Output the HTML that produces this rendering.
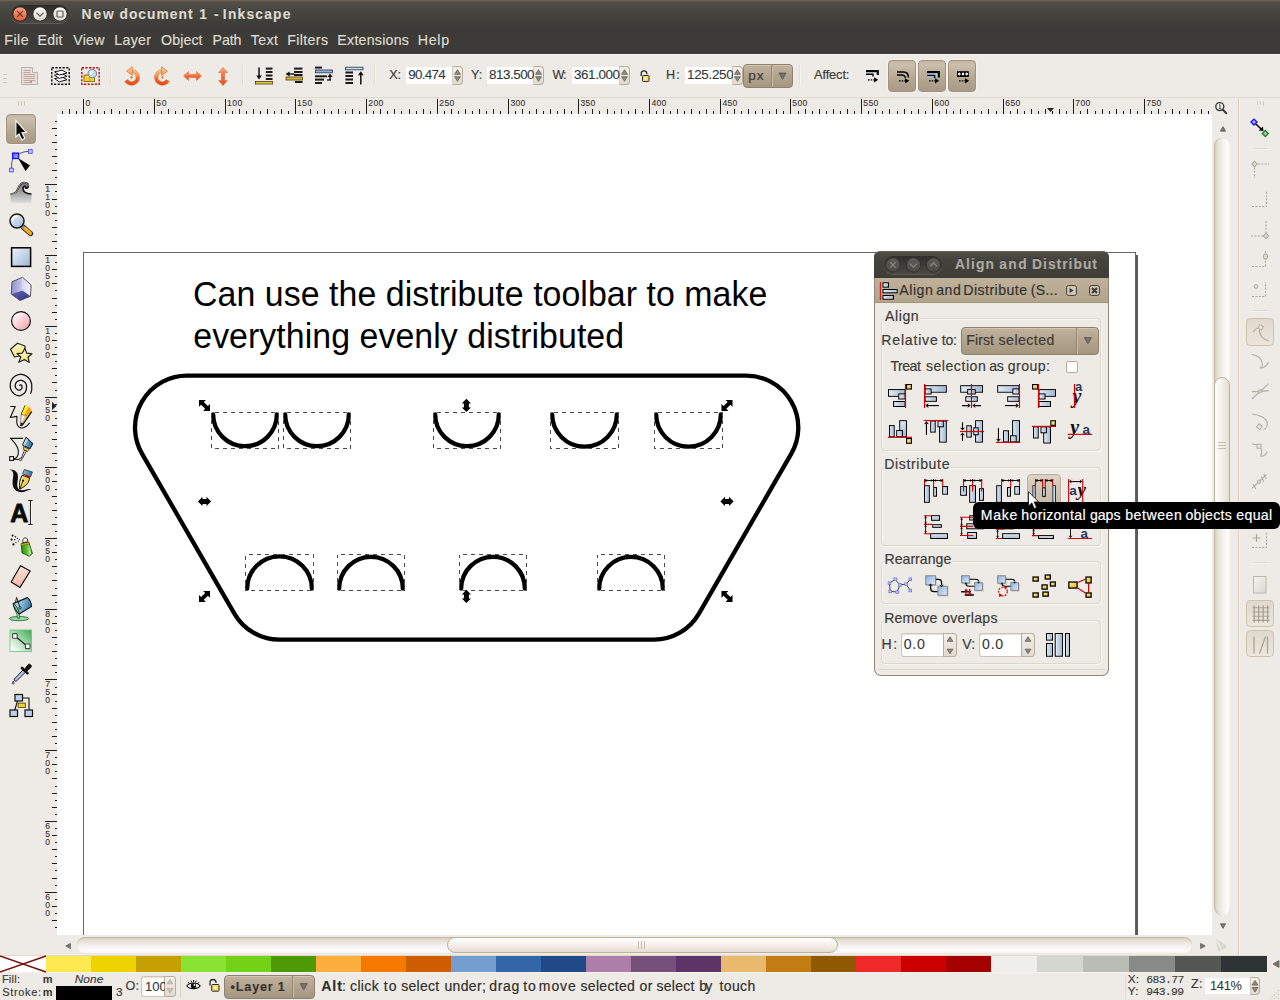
<!DOCTYPE html>
<html><head><meta charset="utf-8"><title>New document 1 - Inkscape</title>
<style>
html,body{margin:0;padding:0;}
body{width:1280px;height:1000px;overflow:hidden;position:relative;background:#eeeae5;font-family:"Liberation Sans",sans-serif;}
.a{position:absolute;box-sizing:border-box;}
.t{position:absolute;white-space:pre;font-family:"Liberation Sans",sans-serif;}
svg{overflow:visible;}
svg text{white-space:pre;}
</style></head><body>
<div class="a" style="left:0px;top:0px;width:1280px;height:28px;background:linear-gradient(#5a574f 0px,#4f4d47 3px,#3f3e39 22px,#3c3b37 28px);"></div>
<div class="a" style="left:0px;top:0px;width:1280px;height:1px;background:#6f6253;"></div>
<div class="a" style="left:11px;top:5px;width:58px;height:18px;border-radius:9px;background:linear-gradient(#2b2a27,#4a4843);box-shadow:0 1px 0 #5d5b55;"></div>
<svg class="a" style="left:0px;top:0px;" width="100" height="28" viewBox="0 0 100 28"><defs><linearGradient id="gclose" x1="0" y1="0" x2="0" y2="1"><stop offset="0" stop-color="#f9a17e"/><stop offset="1" stop-color="#e55d30"/></linearGradient><linearGradient id="ggrey" x1="0" y1="0" x2="0" y2="1"><stop offset="0" stop-color="#fdfcfa"/><stop offset="1" stop-color="#d9d4c9"/></linearGradient><linearGradient id="gin" x1="0" y1="0" x2="0" y2="1"><stop offset="0" stop-color="#5e5c56"/><stop offset="1" stop-color="#4c4a45"/></linearGradient></defs><g transform="translate(20,14)"><circle r="7.2" fill="url(#gclose)" stroke="#2a2926" stroke-width="1"/><path d="M-2.9,-2.9L2.9,2.9M2.9,-2.9L-2.9,2.9" stroke="#6a3a28" stroke-width="1.25" fill="none"/></g><g transform="translate(40,14)"><circle r="7.2" fill="url(#ggrey)" stroke="#2a2926" stroke-width="1"/><path d="M-3.6,-1.4L0,2.2L3.6,-1.4" stroke="#5d5a54" stroke-width="1.25" fill="none"/></g><g transform="translate(60,14)"><circle r="7.2" fill="url(#ggrey)" stroke="#2a2926" stroke-width="1"/><rect x="-3" y="-3" width="6" height="6" rx="0.8" stroke="#5d5a54" stroke-width="1.2" fill="none"/></g></svg>
<svg class="a tx" style="left:0;top:0" width="1" height="1"><text x="81.60" y="18.40" font-size="13.80" fill="#dfdbd2" stroke="#dfdbd2" stroke-width="0.09" letter-spacing="1.859" font-weight="bold" style="fill:#2a2926">New</text><text x="81.60" y="19.40" font-size="13.80" fill="#dfdbd2" stroke="#dfdbd2" stroke-width="0.09" letter-spacing="1.859" font-weight="bold">New</text></svg>
<svg class="a tx" style="left:0;top:0" width="1" height="1"><text x="119.45" y="18.40" font-size="13.80" fill="#dfdbd2" stroke="#dfdbd2" stroke-width="0.09" letter-spacing="1.032" font-weight="bold" style="fill:#2a2926">document</text><text x="119.45" y="19.40" font-size="13.80" fill="#dfdbd2" stroke="#dfdbd2" stroke-width="0.09" letter-spacing="1.032" font-weight="bold">document</text></svg>
<svg class="a tx" style="left:0;top:0" width="1" height="1"><text x="199.17" y="18.40" font-size="13.80" fill="#dfdbd2" stroke="#dfdbd2" stroke-width="0.09" font-weight="bold" style="fill:#2a2926">1</text><text x="199.17" y="19.40" font-size="13.80" fill="#dfdbd2" stroke="#dfdbd2" stroke-width="0.09" font-weight="bold">1</text></svg>
<svg class="a tx" style="left:0;top:0" width="1" height="1"><text x="214.02" y="18.40" font-size="13.80" fill="#dfdbd2" stroke="#dfdbd2" stroke-width="0.09" font-weight="bold" style="fill:#2a2926">-</text><text x="214.02" y="19.40" font-size="13.80" fill="#dfdbd2" stroke="#dfdbd2" stroke-width="0.09" font-weight="bold">-</text></svg>
<svg class="a tx" style="left:0;top:0" width="1" height="1"><text x="222.85" y="18.40" font-size="13.80" fill="#dfdbd2" stroke="#dfdbd2" stroke-width="0.09" letter-spacing="1.214" font-weight="bold" style="fill:#2a2926">Inkscape</text><text x="222.85" y="19.40" font-size="13.80" fill="#dfdbd2" stroke="#dfdbd2" stroke-width="0.09" letter-spacing="1.214" font-weight="bold">Inkscape</text></svg>
<div class="a" style="left:0px;top:28px;width:1280px;height:26px;background:#3c3b37;"></div>
<svg class="a tx" style="left:0;top:0" width="1" height="1"><text x="4.36" y="45.00" font-size="14.20" fill="#dfdbd2" stroke="#dfdbd2" stroke-width="0.18" letter-spacing="0.447">File</text></svg>
<svg class="a tx" style="left:0;top:0" width="1" height="1"><text x="37.61" y="45.00" font-size="14.20" fill="#dfdbd2" stroke="#dfdbd2" stroke-width="0.18" letter-spacing="0.154">Edit</text></svg>
<svg class="a tx" style="left:0;top:0" width="1" height="1"><text x="73.25" y="45.00" font-size="14.20" fill="#dfdbd2" stroke="#dfdbd2" stroke-width="0.18" letter-spacing="0.240">View</text></svg>
<svg class="a tx" style="left:0;top:0" width="1" height="1"><text x="114.36" y="45.00" font-size="14.20" fill="#dfdbd2" stroke="#dfdbd2" stroke-width="0.18" letter-spacing="0.257">Layer</text></svg>
<svg class="a tx" style="left:0;top:0" width="1" height="1"><text x="161.11" y="45.00" font-size="14.20" fill="#dfdbd2" stroke="#dfdbd2" stroke-width="0.18" letter-spacing="0.084">Object</text></svg>
<svg class="a tx" style="left:0;top:0" width="1" height="1"><text x="212.61" y="45.00" font-size="14.20" fill="#dfdbd2" stroke="#dfdbd2" stroke-width="0.18" letter-spacing="-0.148">Path</text></svg>
<svg class="a tx" style="left:0;top:0" width="1" height="1"><text x="250.72" y="45.00" font-size="14.20" fill="#dfdbd2" stroke="#dfdbd2" stroke-width="0.18" letter-spacing="0.433">Text</text></svg>
<svg class="a tx" style="left:0;top:0" width="1" height="1"><text x="287.36" y="45.00" font-size="14.20" fill="#dfdbd2" stroke="#dfdbd2" stroke-width="0.18" letter-spacing="0.335">Filters</text></svg>
<svg class="a tx" style="left:0;top:0" width="1" height="1"><text x="337.36" y="45.00" font-size="14.20" fill="#dfdbd2" stroke="#dfdbd2" stroke-width="0.18" letter-spacing="0.244">Extensions</text></svg>
<svg class="a tx" style="left:0;top:0" width="1" height="1"><text x="417.86" y="45.00" font-size="14.20" fill="#dfdbd2" stroke="#dfdbd2" stroke-width="0.18" letter-spacing="0.674">Help</text></svg>
<div class="a" style="left:0px;top:54px;width:1280px;height:1px;background:#f8f6f3;"></div>
<div class="a" style="left:0px;top:97px;width:1280px;height:1px;background:#e2dace;"></div>
<svg class="a" style="left:3px;top:74px;" width="5" height="9" viewBox="0 0 5 9"><path d="M0,0.5H4M0,4.5H4M0,8.5H4" stroke="#cfc6b6" stroke-width="1"/></svg>
<div class="a" style="left:110px;top:65px;width:1px;height:20px;background:#e3dcd1;"></div>
<div class="a" style="left:111px;top:65px;width:1px;height:20px;background:#f6f3ef;"></div>
<div class="a" style="left:242px;top:65px;width:1px;height:20px;background:#e3dcd1;"></div>
<div class="a" style="left:243px;top:65px;width:1px;height:20px;background:#f6f3ef;"></div>
<div class="a" style="left:374px;top:65px;width:1px;height:20px;background:#e3dcd1;"></div>
<div class="a" style="left:375px;top:65px;width:1px;height:20px;background:#f6f3ef;"></div>
<div class="a" style="left:799px;top:65px;width:1px;height:20px;background:#e3dcd1;"></div>
<div class="a" style="left:800px;top:65px;width:1px;height:20px;background:#f6f3ef;"></div>
<svg class="a tx" style="left:0;top:0" width="1" height="1"><text x="389.15" y="79.00" font-size="12.60" fill="#3c3b37" stroke="#3c3b37" stroke-width="0.17" letter-spacing="0.079">X:</text></svg>
<div class="a" style="left:406px;top:67px;width:47px;height:17px;background:#fff;"></div>
<div class="a" style="left:452px;top:66px;width:11px;height:19px;background:linear-gradient(#f3efe9,#e1dad0);border:1px solid #b9ae9c;border-radius:0 4px 4px 0;border-left-color:#d5ccbd;"></div>
<svg class="a" style="left:452px;top:66px;" width="11" height="19" viewBox="0 0 11 19"><path d="M5.5,3.7 l-2.9,4.6 h5.8z M5.5,15.3 l-2.9,-4.6 h5.8z" fill="#8f8b84" stroke="#56534d" stroke-width="0.7" stroke-linejoin="round"/></svg>
<svg class="a tx" style="left:0;top:0" width="1" height="1"><text x="408.15" y="79.30" font-size="13.40" fill="#33383b" stroke="#33383b" stroke-width="0.10" letter-spacing="-0.703">90.474</text></svg>
<svg class="a tx" style="left:0;top:0" width="1" height="1"><text x="471.00" y="79.00" font-size="12.60" fill="#3c3b37" stroke="#3c3b37" stroke-width="0.17" letter-spacing="-0.078">Y:</text></svg>
<div class="a" style="left:486.5px;top:67px;width:47.5px;height:17px;background:#fff;"></div>
<div class="a" style="left:533px;top:66px;width:11px;height:19px;background:linear-gradient(#f3efe9,#e1dad0);border:1px solid #b9ae9c;border-radius:0 4px 4px 0;border-left-color:#d5ccbd;"></div>
<svg class="a" style="left:533px;top:66px;" width="11" height="19" viewBox="0 0 11 19"><path d="M5.5,3.7 l-2.9,4.6 h5.8z M5.5,15.3 l-2.9,-4.6 h5.8z" fill="#8f8b84" stroke="#56534d" stroke-width="0.7" stroke-linejoin="round"/></svg>
<svg class="a tx" style="left:488.86px;top:65.90px;overflow:hidden" width="45.60" height="20.10"><text x="0" y="13.40" font-size="13.40" fill="#33383b" stroke="#33383b" stroke-width="0.10" letter-spacing="-0.473">813.500</text></svg>
<svg class="a tx" style="left:0;top:0" width="1" height="1"><text x="552.50" y="79.00" font-size="12.60" fill="#3c3b37" stroke="#3c3b37" stroke-width="0.17" letter-spacing="-1.049">W:</text></svg>
<div class="a" style="left:571.5px;top:67px;width:48px;height:17px;background:#fff;"></div>
<div class="a" style="left:618.5px;top:66px;width:11px;height:19px;background:linear-gradient(#f3efe9,#e1dad0);border:1px solid #b9ae9c;border-radius:0 4px 4px 0;border-left-color:#d5ccbd;"></div>
<svg class="a" style="left:618.5px;top:66px;" width="11" height="19" viewBox="0 0 11 19"><path d="M5.5,3.7 l-2.9,4.6 h5.8z M5.5,15.3 l-2.9,-4.6 h5.8z" fill="#8f8b84" stroke="#56534d" stroke-width="0.7" stroke-linejoin="round"/></svg>
<svg class="a tx" style="left:573.93px;top:65.90px;overflow:hidden" width="46.40" height="20.10"><text x="0" y="13.40" font-size="13.40" fill="#33383b" stroke="#33383b" stroke-width="0.10" letter-spacing="-0.400">361.000</text></svg>
<svg class="a tx" style="left:0;top:0" width="1" height="1"><text x="665.89" y="79.00" font-size="12.60" fill="#3c3b37" stroke="#3c3b37" stroke-width="0.17" letter-spacing="1.242">H:</text></svg>
<div class="a" style="left:685px;top:67px;width:48px;height:17px;background:#fff;"></div>
<div class="a" style="left:732px;top:66px;width:11px;height:19px;background:linear-gradient(#f3efe9,#e1dad0);border:1px solid #b9ae9c;border-radius:0 4px 4px 0;border-left-color:#d5ccbd;"></div>
<svg class="a" style="left:732px;top:66px;" width="11" height="19" viewBox="0 0 11 19"><path d="M5.5,3.7 l-2.9,4.6 h5.8z M5.5,15.3 l-2.9,-4.6 h5.8z" fill="#8f8b84" stroke="#56534d" stroke-width="0.7" stroke-linejoin="round"/></svg>
<svg class="a tx" style="left:686.79px;top:65.90px;overflow:hidden" width="46.40" height="20.10"><text x="0" y="13.40" font-size="13.40" fill="#33383b" stroke="#33383b" stroke-width="0.10" letter-spacing="-0.294">125.250</text></svg>
<svg class="a" style="left:639px;top:70px;" width="11" height="13" viewBox="0 0 11 13"><path d="M2.2,6 V3.6 a2.8,2.8 0 0 1 5.6,0 V4.2" fill="none" stroke="#2b2b2b" stroke-width="1.3"/><rect x="3.5" y="5.5" width="6.5" height="6" rx="0.8" fill="#f3d86a" stroke="#2b2b2b" stroke-width="1"/><rect x="5.7" y="7.6" width="2" height="2" fill="#fff8d0"/></svg>
<div class="a" style="left:742.5px;top:64px;width:50.5px;height:24px;border:1px solid #8d8170;border-radius:4px;background:linear-gradient(#c0b29c 0,#b3a58f 45%,#a5967f 100%);box-shadow:inset 0 1px 0 #d2c6b3;"></div>
<div class="a" style="left:771px;top:65px;width:1px;height:22px;background:#948772;"></div>
<div class="a" style="left:772px;top:65px;width:1px;height:22px;background:#c9bca8;"></div>
<svg class="a" style="left:0px;top:0px;" width="1" height="1" viewBox="0 0 1 1"><path d="M779,73.1 h7 l-3.5,6.2z" fill="#77726a" stroke="#4c4944" stroke-width="0.7" stroke-linejoin="round"/></svg>
<svg class="a tx" style="left:0;top:0" width="1" height="1"><text x="748.18" y="79.50" font-size="13.60" fill="#3c3b37" stroke="#3c3b37" stroke-width="0.18" letter-spacing="1.104">px</text></svg>
<svg class="a tx" style="left:0;top:0" width="1" height="1"><text x="814.00" y="79.30" font-size="12.80" fill="#3c3b37" stroke="#3c3b37" stroke-width="0.17" letter-spacing="-0.107">Affect:</text></svg>
<div class="a" style="left:888px;top:60px;width:28px;height:31.5px;border:1px solid #a09179;border-radius:4px;background:linear-gradient(#c3b7a3 0,#cabfad 12%,#b6a995 55%,#a89a84 100%);box-shadow:0 0 0 1px rgba(255,255,255,0.45);"></div>
<div class="a" style="left:918px;top:60px;width:28px;height:31.5px;border:1px solid #a09179;border-radius:4px;background:linear-gradient(#c3b7a3 0,#cabfad 12%,#b6a995 55%,#a89a84 100%);box-shadow:0 0 0 1px rgba(255,255,255,0.45);"></div>
<div class="a" style="left:948px;top:60px;width:28px;height:31.5px;border:1px solid #a09179;border-radius:4px;background:linear-gradient(#c3b7a3 0,#cabfad 12%,#b6a995 55%,#a89a84 100%);box-shadow:0 0 0 1px rgba(255,255,255,0.45);"></div>
<svg class="a" style="left:866px;top:70.2px;" width="13" height="13" viewBox="0 0 13 13"><path d="M0,1.1H11.8V5" fill="none" stroke="#000" stroke-width="2.1"/><path d="M0,4.2H7V6.6" fill="none" stroke="#000" stroke-width="1.4"/><path d="M2,9.8H8" stroke="#000" stroke-width="1.2" stroke-dasharray="1.6,1.1"/><path d="M8,7.2L12.2,9.8L8,12.4z" fill="#000"/></svg>
<svg class="a" style="left:897px;top:71px;" width="13" height="13" viewBox="0 0 13 13"><path d="M0,1H6.5 C10,1 11.4,3 11.4,6.4" fill="none" stroke="#000" stroke-width="1.5"/><path d="M0,4H4.5 C7.2,4 8.2,5.2 8.4,7" fill="none" stroke="#000" stroke-width="1.4"/><path d="M2,9.8H8" stroke="#000" stroke-width="1.2" stroke-dasharray="1.6,1.1"/><path d="M8,7.2L12.2,9.8L8,12.4z" fill="#000"/></svg>
<svg class="a" style="left:926.8px;top:71px;" width="13" height="13" viewBox="0 0 13 13"><defs><linearGradient id="afb" x1="0" y1="0" x2="0" y2="1"><stop offset="0" stop-color="#e8f0fa"/><stop offset="1" stop-color="#8fb0d8"/></linearGradient></defs><rect x="0" y="1" width="11" height="6" fill="url(#afb)"/><path d="M0,1.1H11.8V6.5" fill="none" stroke="#000" stroke-width="2.1"/><path d="M0,4.4H7.6V7" fill="none" stroke="#000" stroke-width="1.4"/><path d="M2,9.8H8" stroke="#000" stroke-width="1.2" stroke-dasharray="1.6,1.1"/><path d="M8,7.2L12.2,9.8L8,12.4z" fill="#000"/></svg>
<svg class="a" style="left:957px;top:71px;" width="13" height="13" viewBox="0 0 13 13"><rect x="0" y="0.2" width="11.8" height="5.8" fill="#000"/><path d="M2.3,1.2L3.9,3L2.3,4.8L0.7,3zM6,1.2L7.6,3L6,4.8L4.4,3zM9.7,1.2L11.3,3L9.7,4.8L8.1,3z" fill="#fff"/><path d="M2,9.8H8" stroke="#000" stroke-width="1.2" stroke-dasharray="1.6,1.1"/><path d="M8,7.2L12.2,9.8L8,12.4z" fill="#000"/></svg>
<svg class="a" style="left:21px;top:67px;" width="17" height="18" viewBox="0 0 17 18"><path d="M0.5,0.5H11.5L16.5,5.5V17.5H0.5z" fill="#e6dfda" stroke="#b9b3ad"/><path d="M11.5,0.5V5.5H16.5" fill="#f8f5f2" stroke="#b9b3ad"/><path d="M2.5,3.5H10M2.5,5.5H9M2.5,7.5H14M2.5,9.5H14M2.5,11.5H14M2.5,13.5H14M2.5,15.5H9" stroke="#c7a79c" stroke-width="1.1"/><path d="M10,14V16" stroke="#8b6b60" stroke-width="1.2"/></svg>
<svg class="a" style="left:50.5px;top:67px;" width="19" height="18" viewBox="0 0 19 18"><rect x="0.8" y="0.8" width="17.4" height="16.4" fill="none" stroke="#111" stroke-width="1.4" stroke-dasharray="2.2,1.4"/><path d="M3.5,11.6 L11.2,10 L16,12.8 L8.3,14.8z" fill="#fff" stroke="#111" stroke-width="1" stroke-linejoin="round"/><path d="M3.5,8.2 L11.2,6.6 L16,9.4 L8.3,11.4z" fill="#fff" stroke="#111" stroke-width="1" stroke-linejoin="round"/><path d="M3.5,4.8 L11.2,3.2 L16,6 L8.3,8z" fill="#fff" stroke="#111" stroke-width="1" stroke-linejoin="round"/></svg>
<svg class="a" style="left:80.5px;top:67px;" width="19" height="18" viewBox="0 0 19 18"><rect x="0.8" y="0.8" width="17.4" height="16.4" fill="none" stroke="#d40000" stroke-width="1.4" stroke-dasharray="2.2,1.4"/><path d="M3,8H9V14.5H3z" fill="#f6d336" stroke="#7c6a10" stroke-width="0.9"/><path d="M9,10.5H13.5V14.5H9" fill="#f6d336" stroke="#7c6a10" stroke-width="0.9"/><circle cx="11.3" cy="6.6" r="4.3" fill="#c7d8ea" stroke="#6d7f92" stroke-width="1"/><circle cx="10.3" cy="5.5" r="1.8" fill="#eef4fa"/></svg>
<svg class="a" style="left:124.4px;top:66px;" width="17" height="20" viewBox="0 0 17 20"><defs><linearGradient id="org" x1="0" y1="0" x2="0" y2="1"><stop offset="0" stop-color="#f9a56c"/><stop offset="0.5" stop-color="#f0703a"/><stop offset="1" stop-color="#d9531e"/></linearGradient><linearGradient id="org2" gradientUnits="userSpaceOnUse" x1="0" y1="1.5" x2="0" y2="18.5"><stop offset="0" stop-color="#f9cc98"/><stop offset="0.4" stop-color="#f3a463"/><stop offset="0.68" stop-color="#ec6428"/><stop offset="1" stop-color="#e64a14"/></linearGradient></defs><path d="M6.5,5.2 A6.2,6.2 0 1 1 2.2,14.4" stroke="#d4652e" stroke-width="4.4" fill="none" opacity="0.55"/><path d="M6.5,5.2 A6.2,6.2 0 1 1 2.2,14.4" stroke="url(#org2)" stroke-width="3.5" fill="none"/><path d="M2.5,5.2 L8.3,0.7 V9.4z" fill="url(#org2)" stroke="#d9652c" stroke-width="0.6" stroke-linejoin="round"/><path d="M7.6,9.7 L9.1,11.3 L7.6,12.9 L6.1,11.3z" fill="#ee7a3a"/></svg>
<svg class="a" style="left:152.7px;top:66px;" width="17" height="20" viewBox="0 0 17 20"><g transform="translate(17,0) scale(-1,1)"><path d="M6.5,5.2 A6.2,6.2 0 1 1 2.2,14.4" stroke="#d4652e" stroke-width="4.4" fill="none" opacity="0.55"/><path d="M6.5,5.2 A6.2,6.2 0 1 1 2.2,14.4" stroke="url(#org2)" stroke-width="3.5" fill="none"/><path d="M2.5,5.2 L8.3,0.7 V9.4z" fill="url(#org2)" stroke="#d9652c" stroke-width="0.6" stroke-linejoin="round"/><path d="M7.6,9.7 L9.1,11.3 L7.6,12.9 L6.1,11.3z" fill="#ee7a3a"/></g></svg>
<svg class="a" style="left:182.5px;top:71px;" width="19" height="10" viewBox="0 0 19 10"><path d="M0.5,5 L5.5,0.6 V3.4 H13.5 V0.6 L18.5,5 L13.5,9.4 V6.6 H5.5 V9.4z" fill="url(#org)" stroke="#d8632c" stroke-width="0.5"/></svg>
<svg class="a" style="left:217.5px;top:66.5px;" width="10" height="19" viewBox="0 0 10 19"><path d="M5,0.5 L9.4,5.5 H6.6 V13.5 H9.4 L5,18.5 L0.6,13.5 H3.4 V5.5 H0.6z" fill="url(#org)" stroke="#d8632c" stroke-width="0.5"/></svg>
<svg class="a" style="left:255px;top:66px;" width="20" height="20" viewBox="0 0 20 20"><rect x="10.8" y="1.6" width="6.7" height="2" fill="#1b1b1b"/><rect x="10.8" y="5" width="6.7" height="2" fill="#1b1b1b"/><rect x="10.8" y="8.5" width="6.7" height="2" fill="#1b1b1b"/><rect x="10.8" y="12" width="6.7" height="2" fill="#1b1b1b"/><rect x="0.5" y="15.4" width="17" height="2.6" fill="#e8c547" stroke="#4a3d0a" stroke-width="0.8"/><path d="M4,1.6V11" stroke="#111" stroke-width="1.5"/><path d="M1.2,9.6L4,13.6L6.8,9.6z" fill="#111"/></svg>
<svg class="a" style="left:285px;top:66px;" width="20" height="20" viewBox="0 0 20 20"><rect x="9" y="1.6" width="8.5" height="2" fill="#1b1b1b"/><rect x="9" y="5" width="8.5" height="2" fill="#1b1b1b"/><rect x="10" y="15" width="7.5" height="2" fill="#1b1b1b"/><rect x="1" y="11" width="16.5" height="3" fill="#d9b53c" stroke="#4a3d0a" stroke-width="0.8"/><path d="M4,8H9" stroke="#111" stroke-width="1.4"/><path d="M4.6,5.4L0.6,8L4.6,10.6z" fill="#111"/><rect x="9" y="8" width="8.5" height="2" fill="#1b1b1b"/></svg>
<svg class="a" style="left:315px;top:66px;" width="20" height="20" viewBox="0 0 20 20"><rect x="0" y="0.6" width="7" height="2" fill="#1b1b1b"/><rect x="0.4" y="4" width="17" height="2.8" fill="#8fb0dd" stroke="#27364d" stroke-width="0.8"/><rect x="0" y="9.3" width="12" height="2" fill="#1b1b1b"/><rect x="0" y="12.6" width="9" height="2" fill="#1b1b1b"/><rect x="0" y="16" width="7" height="2" fill="#1b1b1b"/><path d="M15,10V14" stroke="#111" stroke-width="1.4"/><path d="M12.4,11L15,7.6L17.6,11z" fill="#111"/><path d="M12,14H16" stroke="#111" stroke-width="1.3"/></svg>
<svg class="a" style="left:344.5px;top:66px;" width="20" height="20" viewBox="0 0 20 20"><rect x="0.4" y="1.2" width="17.6" height="2.6" fill="#c5d7ee" stroke="#27364d" stroke-width="0.8"/><rect x="0.4" y="5.5" width="7.6" height="2" fill="#1b1b1b"/><rect x="0.4" y="9" width="7.6" height="2" fill="#1b1b1b"/><rect x="0.4" y="12.5" width="7.6" height="2" fill="#1b1b1b"/><rect x="0.4" y="16" width="7.6" height="2" fill="#1b1b1b"/><path d="M15.8,8V18.5" stroke="#111" stroke-width="1.5"/><path d="M13,9.2L15.8,5.2L18.6,9.2z" fill="#111"/></svg>
<svg class="a" style="left:18px;top:101px;" width="8" height="5" viewBox="0 0 8 5"><path d="M0.5,0V4.5M3.5,0V4.5M6.5,0V4.5" stroke="#cfc6b6" stroke-width="1"/></svg>
<svg class="a" style="left:0px;top:0px;" width="1280" height="120" viewBox="0 0 1280 120"><path d="M62.5,111V114M69.5,109V114M76.5,111V114M83.5,99V114M90.5,111V114M97.5,109V114M104.5,111V114M111.5,109V114M119.5,111V114M126.5,109V114M133.5,111V114M140.5,109V114M147.5,111V114M154.5,99V114M161.5,111V114M168.5,109V114M175.5,111V114M182.5,109V114M189.5,111V114M196.5,109V114M203.5,111V114M211.5,109V114M218.5,111V114M225.5,99V114M232.5,111V114M239.5,109V114M246.5,111V114M253.5,109V114M260.5,111V114M267.5,109V114M274.5,111V114M281.5,109V114M288.5,111V114M295.5,99V114M302.5,111V114M310.5,109V114M317.5,111V114M324.5,109V114M331.5,111V114M338.5,109V114M345.5,111V114M352.5,109V114M359.5,111V114M366.5,99V114M373.5,111V114M380.5,109V114M387.5,111V114M394.5,109V114M401.5,111V114M409.5,109V114M416.5,111V114M423.5,109V114M430.5,111V114M437.5,99V114M444.5,111V114M451.5,109V114M458.5,111V114M465.5,109V114M472.5,111V114M479.5,109V114M486.5,111V114M493.5,109V114M500.5,111V114M508.5,99V114M515.5,111V114M522.5,109V114M529.5,111V114M536.5,109V114M543.5,111V114M550.5,109V114M557.5,111V114M564.5,109V114M571.5,111V114M578.5,99V114M585.5,111V114M592.5,109V114M599.5,111V114M607.5,109V114M614.5,111V114M621.5,109V114M628.5,111V114M635.5,109V114M642.5,111V114M649.5,99V114M656.5,111V114M663.5,109V114M670.5,111V114M677.5,109V114M684.5,111V114M691.5,109V114M699.5,111V114M706.5,109V114M713.5,111V114M720.5,99V114M727.5,111V114M734.5,109V114M741.5,111V114M748.5,109V114M755.5,111V114M762.5,109V114M769.5,111V114M776.5,109V114M783.5,111V114M790.5,99V114M798.5,111V114M805.5,109V114M812.5,111V114M819.5,109V114M826.5,111V114M833.5,109V114M840.5,111V114M847.5,109V114M854.5,111V114M861.5,99V114M868.5,111V114M875.5,109V114M882.5,111V114M889.5,109V114M897.5,111V114M904.5,109V114M911.5,111V114M918.5,109V114M925.5,111V114M932.5,99V114M939.5,111V114M946.5,109V114M953.5,111V114M960.5,109V114M967.5,111V114M974.5,109V114M981.5,111V114M988.5,109V114M996.5,111V114M1003.5,99V114M1010.5,111V114M1017.5,109V114M1024.5,111V114M1031.5,109V114M1038.5,111V114M1045.5,109V114M1052.5,111V114M1059.5,109V114M1066.5,111V114M1073.5,99V114M1080.5,111V114M1087.5,109V114M1095.5,111V114M1102.5,109V114M1109.5,111V114M1116.5,109V114M1123.5,111V114M1130.5,109V114M1137.5,111V114M1144.5,99V114M1151.5,111V114M1158.5,109V114M1165.5,111V114M1172.5,109V114M1179.5,111V114M1187.5,109V114M1194.5,111V114M1201.5,109V114M1208.5,111V114" stroke="#1e1d1b" stroke-width="1" fill="none" shape-rendering="crispEdges"/></svg>
<svg class="a tx" style="left:0;top:0" width="1" height="1"><text x="85.40" y="105.70" font-size="8.60" fill="#3a3631" stroke="#3a3631" stroke-width="0.11">0</text></svg>
<svg class="a tx" style="left:0;top:0" width="1" height="1"><text x="156.36" y="105.70" font-size="8.60" fill="#3a3631" stroke="#3a3631" stroke-width="0.11" letter-spacing="0.599">50</text></svg>
<svg class="a tx" style="left:0;top:0" width="1" height="1"><text x="227.05" y="105.70" font-size="8.60" fill="#3a3631" stroke="#3a3631" stroke-width="0.11" letter-spacing="0.439">100</text></svg>
<svg class="a tx" style="left:0;top:0" width="1" height="1"><text x="297.06" y="105.70" font-size="8.60" fill="#3a3631" stroke="#3a3631" stroke-width="0.11" letter-spacing="0.439">150</text></svg>
<svg class="a tx" style="left:0;top:0" width="1" height="1"><text x="368.27" y="105.70" font-size="8.60" fill="#3a3631" stroke="#3a3631" stroke-width="0.11" letter-spacing="0.331">200</text></svg>
<svg class="a tx" style="left:0;top:0" width="1" height="1"><text x="439.27" y="105.70" font-size="8.60" fill="#3a3631" stroke="#3a3631" stroke-width="0.11" letter-spacing="0.331">250</text></svg>
<svg class="a tx" style="left:0;top:0" width="1" height="1"><text x="510.40" y="105.70" font-size="8.60" fill="#3a3631" stroke="#3a3631" stroke-width="0.11" letter-spacing="0.267">300</text></svg>
<svg class="a tx" style="left:0;top:0" width="1" height="1"><text x="580.40" y="105.70" font-size="8.60" fill="#3a3631" stroke="#3a3631" stroke-width="0.11" letter-spacing="0.266">350</text></svg>
<svg class="a tx" style="left:0;top:0" width="1" height="1"><text x="651.53" y="105.70" font-size="8.60" fill="#3a3631" stroke="#3a3631" stroke-width="0.11" letter-spacing="0.202">400</text></svg>
<svg class="a tx" style="left:0;top:0" width="1" height="1"><text x="722.53" y="105.70" font-size="8.60" fill="#3a3631" stroke="#3a3631" stroke-width="0.11" letter-spacing="0.202">450</text></svg>
<svg class="a tx" style="left:0;top:0" width="1" height="1"><text x="792.36" y="105.70" font-size="8.60" fill="#3a3631" stroke="#3a3631" stroke-width="0.11" letter-spacing="0.288">500</text></svg>
<svg class="a tx" style="left:0;top:0" width="1" height="1"><text x="863.36" y="105.70" font-size="8.60" fill="#3a3631" stroke="#3a3631" stroke-width="0.11" letter-spacing="0.288">550</text></svg>
<svg class="a tx" style="left:0;top:0" width="1" height="1"><text x="934.27" y="105.70" font-size="8.60" fill="#3a3631" stroke="#3a3631" stroke-width="0.11" letter-spacing="0.331">600</text></svg>
<svg class="a tx" style="left:0;top:0" width="1" height="1"><text x="1005.27" y="105.70" font-size="8.60" fill="#3a3631" stroke="#3a3631" stroke-width="0.11" letter-spacing="0.331">650</text></svg>
<svg class="a tx" style="left:0;top:0" width="1" height="1"><text x="1075.27" y="105.70" font-size="8.60" fill="#3a3631" stroke="#3a3631" stroke-width="0.11" letter-spacing="0.331">700</text></svg>
<svg class="a tx" style="left:0;top:0" width="1" height="1"><text x="1146.27" y="105.70" font-size="8.60" fill="#3a3631" stroke="#3a3631" stroke-width="0.11" letter-spacing="0.331">750</text></svg>
<svg class="a" style="left:0px;top:0px;" width="60" height="940" viewBox="0 0 60 940"><path d="M55,121.5H57M52,128.5H57M55,135.5H57M52,142.5H57M55,149.5H57M52,156.5H57M55,163.5H57M52,170.5H57M55,177.5H57M45,184.5H57M55,191.5H57M52,199.5H57M55,206.5H57M52,213.5H57M55,220.5H57M52,227.5H57M55,234.5H57M52,241.5H57M55,248.5H57M45,255.5H57M55,262.5H57M52,269.5H57M55,276.5H57M52,283.5H57M55,290.5H57M52,298.5H57M55,305.5H57M52,312.5H57M55,319.5H57M45,326.5H57M55,333.5H57M52,340.5H57M55,347.5H57M52,354.5H57M55,361.5H57M52,368.5H57M55,375.5H57M52,382.5H57M55,390.5H57M45,397.5H57M55,404.5H57M52,411.5H57M55,418.5H57M52,425.5H57M55,432.5H57M52,439.5H57M55,446.5H57M52,453.5H57M55,460.5H57M45,467.5H57M55,474.5H57M52,481.5H57M55,489.5H57M52,496.5H57M55,503.5H57M52,510.5H57M55,517.5H57M52,524.5H57M55,531.5H57M45,538.5H57M55,545.5H57M52,552.5H57M55,559.5H57M52,566.5H57M55,573.5H57M52,580.5H57M55,588.5H57M52,595.5H57M55,602.5H57M45,609.5H57M55,616.5H57M52,623.5H57M55,630.5H57M52,637.5H57M55,644.5H57M52,651.5H57M55,658.5H57M52,665.5H57M55,672.5H57M45,679.5H57M55,687.5H57M52,694.5H57M55,701.5H57M52,708.5H57M55,715.5H57M52,722.5H57M55,729.5H57M52,736.5H57M55,743.5H57M45,750.5H57M55,757.5H57M52,764.5H57M55,771.5H57M52,778.5H57M55,786.5H57M52,793.5H57M55,800.5H57M52,807.5H57M55,814.5H57M45,821.5H57M55,828.5H57M52,835.5H57M55,842.5H57M52,849.5H57M55,856.5H57M52,863.5H57M55,870.5H57M52,878.5H57M55,885.5H57M45,892.5H57M55,899.5H57M52,906.5H57M55,913.5H57M52,920.5H57M55,927.5H57" stroke="#1e1d1b" stroke-width="1" fill="none" shape-rendering="crispEdges"/></svg>
<svg class="a tx" style="left:0;top:0" width="1" height="1"><text x="45.20" y="192.30" font-size="8.60" fill="#3a3631" stroke="#3a3631" stroke-width="0.11">1</text></svg>
<svg class="a tx" style="left:0;top:0" width="1" height="1"><text x="45.20" y="200.30" font-size="8.60" fill="#3a3631" stroke="#3a3631" stroke-width="0.11">1</text></svg>
<svg class="a tx" style="left:0;top:0" width="1" height="1"><text x="45.20" y="208.30" font-size="8.60" fill="#3a3631" stroke="#3a3631" stroke-width="0.11">0</text></svg>
<svg class="a tx" style="left:0;top:0" width="1" height="1"><text x="45.20" y="216.30" font-size="8.60" fill="#3a3631" stroke="#3a3631" stroke-width="0.11">0</text></svg>
<svg class="a tx" style="left:0;top:0" width="1" height="1"><text x="45.20" y="263.30" font-size="8.60" fill="#3a3631" stroke="#3a3631" stroke-width="0.11">1</text></svg>
<svg class="a tx" style="left:0;top:0" width="1" height="1"><text x="45.20" y="271.30" font-size="8.60" fill="#3a3631" stroke="#3a3631" stroke-width="0.11">0</text></svg>
<svg class="a tx" style="left:0;top:0" width="1" height="1"><text x="45.20" y="279.30" font-size="8.60" fill="#3a3631" stroke="#3a3631" stroke-width="0.11">5</text></svg>
<svg class="a tx" style="left:0;top:0" width="1" height="1"><text x="45.20" y="287.30" font-size="8.60" fill="#3a3631" stroke="#3a3631" stroke-width="0.11">0</text></svg>
<svg class="a tx" style="left:0;top:0" width="1" height="1"><text x="45.20" y="334.30" font-size="8.60" fill="#3a3631" stroke="#3a3631" stroke-width="0.11">1</text></svg>
<svg class="a tx" style="left:0;top:0" width="1" height="1"><text x="45.20" y="342.30" font-size="8.60" fill="#3a3631" stroke="#3a3631" stroke-width="0.11">0</text></svg>
<svg class="a tx" style="left:0;top:0" width="1" height="1"><text x="45.20" y="350.30" font-size="8.60" fill="#3a3631" stroke="#3a3631" stroke-width="0.11">0</text></svg>
<svg class="a tx" style="left:0;top:0" width="1" height="1"><text x="45.20" y="358.30" font-size="8.60" fill="#3a3631" stroke="#3a3631" stroke-width="0.11">0</text></svg>
<svg class="a tx" style="left:0;top:0" width="1" height="1"><text x="45.20" y="405.30" font-size="8.60" fill="#3a3631" stroke="#3a3631" stroke-width="0.11">9</text></svg>
<svg class="a tx" style="left:0;top:0" width="1" height="1"><text x="45.20" y="413.30" font-size="8.60" fill="#3a3631" stroke="#3a3631" stroke-width="0.11">5</text></svg>
<svg class="a tx" style="left:0;top:0" width="1" height="1"><text x="45.20" y="421.30" font-size="8.60" fill="#3a3631" stroke="#3a3631" stroke-width="0.11">0</text></svg>
<svg class="a tx" style="left:0;top:0" width="1" height="1"><text x="45.20" y="475.30" font-size="8.60" fill="#3a3631" stroke="#3a3631" stroke-width="0.11">9</text></svg>
<svg class="a tx" style="left:0;top:0" width="1" height="1"><text x="45.20" y="483.30" font-size="8.60" fill="#3a3631" stroke="#3a3631" stroke-width="0.11">0</text></svg>
<svg class="a tx" style="left:0;top:0" width="1" height="1"><text x="45.20" y="491.30" font-size="8.60" fill="#3a3631" stroke="#3a3631" stroke-width="0.11">0</text></svg>
<svg class="a tx" style="left:0;top:0" width="1" height="1"><text x="45.20" y="546.30" font-size="8.60" fill="#3a3631" stroke="#3a3631" stroke-width="0.11">8</text></svg>
<svg class="a tx" style="left:0;top:0" width="1" height="1"><text x="45.20" y="554.30" font-size="8.60" fill="#3a3631" stroke="#3a3631" stroke-width="0.11">5</text></svg>
<svg class="a tx" style="left:0;top:0" width="1" height="1"><text x="45.20" y="562.30" font-size="8.60" fill="#3a3631" stroke="#3a3631" stroke-width="0.11">0</text></svg>
<svg class="a tx" style="left:0;top:0" width="1" height="1"><text x="45.20" y="617.30" font-size="8.60" fill="#3a3631" stroke="#3a3631" stroke-width="0.11">8</text></svg>
<svg class="a tx" style="left:0;top:0" width="1" height="1"><text x="45.20" y="625.30" font-size="8.60" fill="#3a3631" stroke="#3a3631" stroke-width="0.11">0</text></svg>
<svg class="a tx" style="left:0;top:0" width="1" height="1"><text x="45.20" y="633.30" font-size="8.60" fill="#3a3631" stroke="#3a3631" stroke-width="0.11">0</text></svg>
<svg class="a tx" style="left:0;top:0" width="1" height="1"><text x="45.20" y="687.30" font-size="8.60" fill="#3a3631" stroke="#3a3631" stroke-width="0.11">7</text></svg>
<svg class="a tx" style="left:0;top:0" width="1" height="1"><text x="45.20" y="695.30" font-size="8.60" fill="#3a3631" stroke="#3a3631" stroke-width="0.11">5</text></svg>
<svg class="a tx" style="left:0;top:0" width="1" height="1"><text x="45.20" y="703.30" font-size="8.60" fill="#3a3631" stroke="#3a3631" stroke-width="0.11">0</text></svg>
<svg class="a tx" style="left:0;top:0" width="1" height="1"><text x="45.20" y="758.30" font-size="8.60" fill="#3a3631" stroke="#3a3631" stroke-width="0.11">7</text></svg>
<svg class="a tx" style="left:0;top:0" width="1" height="1"><text x="45.20" y="766.30" font-size="8.60" fill="#3a3631" stroke="#3a3631" stroke-width="0.11">0</text></svg>
<svg class="a tx" style="left:0;top:0" width="1" height="1"><text x="45.20" y="774.30" font-size="8.60" fill="#3a3631" stroke="#3a3631" stroke-width="0.11">0</text></svg>
<svg class="a tx" style="left:0;top:0" width="1" height="1"><text x="45.20" y="829.30" font-size="8.60" fill="#3a3631" stroke="#3a3631" stroke-width="0.11">6</text></svg>
<svg class="a tx" style="left:0;top:0" width="1" height="1"><text x="45.20" y="837.30" font-size="8.60" fill="#3a3631" stroke="#3a3631" stroke-width="0.11">5</text></svg>
<svg class="a tx" style="left:0;top:0" width="1" height="1"><text x="45.20" y="845.30" font-size="8.60" fill="#3a3631" stroke="#3a3631" stroke-width="0.11">0</text></svg>
<svg class="a tx" style="left:0;top:0" width="1" height="1"><text x="45.20" y="900.30" font-size="8.60" fill="#3a3631" stroke="#3a3631" stroke-width="0.11">6</text></svg>
<svg class="a tx" style="left:0;top:0" width="1" height="1"><text x="45.20" y="908.30" font-size="8.60" fill="#3a3631" stroke="#3a3631" stroke-width="0.11">0</text></svg>
<svg class="a tx" style="left:0;top:0" width="1" height="1"><text x="45.20" y="916.30" font-size="8.60" fill="#3a3631" stroke="#3a3631" stroke-width="0.11">0</text></svg>
<svg class="a" style="left:1047px;top:108px;" width="7" height="4" viewBox="0 0 7 4"><path d="M0,0H7L3.5,4z" fill="#222"/></svg>
<svg class="a" style="left:52px;top:402px;" width="5" height="8" viewBox="0 0 5 8"><path d="M0,0V8L4.5,4z" fill="#222"/></svg>
<div class="a" style="left:57px;top:114px;width:1155px;height:821px;background:#fff;"></div>
<div class="a" style="left:83px;top:252px;width:1053px;height:683px;border:1px solid #666;border-bottom:none;"></div>
<div class="a" style="left:1136px;top:255px;width:2px;height:680px;background:#5a5a5a;"></div>
<svg class="a tx" style="left:0;top:0" width="1" height="1"><text x="193.11" y="306.00" font-size="33.90" fill="#000" letter-spacing="0.042" transform="translate(0,306.00) scale(1,1.0350) translate(0,-306.00)">Can use the distribute toolbar to make</text></svg>
<svg class="a tx" style="left:0;top:0" width="1" height="1"><text x="193.24" y="348.00" font-size="33.90" fill="#000" letter-spacing="0.050" transform="translate(0,348.00) scale(1,1.0350) translate(0,-348.00)">everything evenly distributed</text></svg>
<svg class="a" style="left:0px;top:0px;" width="1280" height="1000" viewBox="0 0 1280 1000"><path d="M187,375.6 H746.3 A52,52 0 0 1 791.33,453.6 L698.93,613.6 A52,52 0 0 1 653.9,639.6 H279.4 A52,52 0 0 1 234.37,613.6 L141.97,453.6 A52,52 0 0 1 187,375.6 Z" fill="none" stroke="#000" stroke-width="4.3"/><path d="M213.15,414.35 A31.85,31.85 0 0 0 276.85,414.35" fill="none" stroke="#000" stroke-width="4.3" stroke-linecap="round"/><rect x="211.5" y="412.5" width="67" height="36" fill="none" stroke="#4a4a4a" stroke-width="1" stroke-dasharray="4,4" stroke-dashoffset="-3" shape-rendering="crispEdges"/><path d="M285.15,414.35 A31.85,31.85 0 0 0 348.85,414.35" fill="none" stroke="#000" stroke-width="4.3" stroke-linecap="round"/><rect x="283.5" y="412.5" width="67" height="36" fill="none" stroke="#4a4a4a" stroke-width="1" stroke-dasharray="4,4" stroke-dashoffset="-3" shape-rendering="crispEdges"/><path d="M435.15,414.35 A31.85,31.85 0 0 0 498.85,414.35" fill="none" stroke="#000" stroke-width="4.3" stroke-linecap="round"/><rect x="433.5" y="412.5" width="67" height="36" fill="none" stroke="#4a4a4a" stroke-width="1" stroke-dasharray="4,4" stroke-dashoffset="-3" shape-rendering="crispEdges"/><path d="M552.15,414.35 A32.35,32.35 0 0 0 616.85,414.35" fill="none" stroke="#000" stroke-width="4.3" stroke-linecap="round"/><rect x="550.5" y="412.5" width="68" height="36" fill="none" stroke="#4a4a4a" stroke-width="1" stroke-dasharray="4,4" stroke-dashoffset="-3" shape-rendering="crispEdges"/><path d="M656.15,414.35 A32.35,32.35 0 0 0 720.85,414.35" fill="none" stroke="#000" stroke-width="4.3" stroke-linecap="round"/><rect x="654.5" y="412.5" width="68" height="36" fill="none" stroke="#4a4a4a" stroke-width="1" stroke-dasharray="4,4" stroke-dashoffset="-3" shape-rendering="crispEdges"/><path d="M247.15,588.65 A32.35,32.35 0 0 1 311.85,588.65" fill="none" stroke="#000" stroke-width="4.3" stroke-linecap="round"/><rect x="245.5" y="554.5" width="68" height="36" fill="none" stroke="#4a4a4a" stroke-width="1" stroke-dasharray="4,4" stroke-dashoffset="-3" shape-rendering="crispEdges"/><path d="M339.15,588.65 A31.85,31.85 0 0 1 402.85,588.65" fill="none" stroke="#000" stroke-width="4.3" stroke-linecap="round"/><rect x="337.5" y="554.5" width="67" height="36" fill="none" stroke="#4a4a4a" stroke-width="1" stroke-dasharray="4,4" stroke-dashoffset="-3" shape-rendering="crispEdges"/><path d="M461.15,588.65 A31.85,31.85 0 0 1 524.85,588.65" fill="none" stroke="#000" stroke-width="4.3" stroke-linecap="round"/><rect x="459.5" y="554.5" width="67" height="36" fill="none" stroke="#4a4a4a" stroke-width="1" stroke-dasharray="4,4" stroke-dashoffset="-3" shape-rendering="crispEdges"/><path d="M599.15,588.65 A31.85,31.85 0 0 1 662.85,588.65" fill="none" stroke="#000" stroke-width="4.3" stroke-linecap="round"/><rect x="597.5" y="554.5" width="67" height="36" fill="none" stroke="#4a4a4a" stroke-width="1" stroke-dasharray="4,4" stroke-dashoffset="-3" shape-rendering="crispEdges"/><path transform="translate(204.5,405.4) rotate(45)" d="M-7.8,0 L-2.9,-4.9 V-1.9 H2.9 V-4.9 L7.8,0 L2.9,4.9 V1.9 H-2.9 V4.9z" fill="#000"/><path transform="translate(466.4,405.4) rotate(90)" d="M-6.6,0 L-2,-4.6 V-2.5 H2 V-4.6 L6.6,0 L2,4.6 V2.5 H-2 V4.6z" fill="#000"/><path transform="translate(727,405.4) rotate(-45)" d="M-7.8,0 L-2.9,-4.9 V-1.9 H2.9 V-4.9 L7.8,0 L2.9,4.9 V1.9 H-2.9 V4.9z" fill="#000"/><path transform="translate(204.5,501.4) rotate(0)" d="M-6.6,0 L-2,-4.6 V-2.5 H2 V-4.6 L6.6,0 L2,4.6 V2.5 H-2 V4.6z" fill="#000"/><path transform="translate(727,501.4) rotate(0)" d="M-6.6,0 L-2,-4.6 V-2.5 H2 V-4.6 L6.6,0 L2,4.6 V2.5 H-2 V4.6z" fill="#000"/><path transform="translate(204.5,596.4) rotate(-45)" d="M-7.8,0 L-2.9,-4.9 V-1.9 H2.9 V-4.9 L7.8,0 L2.9,4.9 V1.9 H-2.9 V4.9z" fill="#000"/><path transform="translate(466.4,596.4) rotate(90)" d="M-6.6,0 L-2,-4.6 V-2.5 H2 V-4.6 L6.6,0 L2,4.6 V2.5 H-2 V4.6z" fill="#000"/><path transform="translate(727,596.4) rotate(45)" d="M-7.8,0 L-2.9,-4.9 V-1.9 H2.9 V-4.9 L7.8,0 L2.9,4.9 V1.9 H-2.9 V4.9z" fill="#000"/></svg>
<div class="a" style="left:77px;top:937px;width:1114.5px;height:16px;border-radius:8px;background:linear-gradient(#d3c9ba 0,#e4ddd2 20%,#f3efe9 50%,#fdfcfb 85%,#f6f3ef 100%);box-shadow:inset 0 1px 0 #c8bba6;"></div>
<div class="a" style="left:447px;top:937px;width:391px;height:16px;border-radius:8px;border:1px solid #bfb29b;background:linear-gradient(#fefefd 0,#f5f2ed 45%,#e5ddd0 100%);"></div>
<svg class="a" style="left:637px;top:941px;" width="10" height="8" viewBox="0 0 10 8"><path d="M1.5,0V8M4.5,0V8M7.5,0V8" stroke="#c9bda9" stroke-width="1"/></svg>
<svg class="a" style="left:64.5px;top:942.5px;" width="6" height="6" viewBox="0 0 6 6"><path d="M5.4,0.4V5.6L0.8,3z" fill="#7b776f" stroke="#55524c" stroke-width="0.7"/></svg>
<svg class="a" style="left:1199.5px;top:942.5px;" width="6" height="6" viewBox="0 0 6 6"><path d="M0.6,0.4V5.6L5.2,3z" fill="#7b776f" stroke="#55524c" stroke-width="0.7"/></svg>
<div class="a" style="left:1214px;top:138px;width:16px;height:776.5px;border-radius:8px;background:linear-gradient(90deg,#d3c9ba 0,#e4ddd2 20%,#f3efe9 50%,#fdfcfb 85%,#f6f3ef 100%);box-shadow:inset 1px 0 0 #c8bba6;"></div>
<div class="a" style="left:1214px;top:377px;width:16px;height:137px;border-radius:8px;border:1px solid #bfb29b;background:linear-gradient(90deg,#fefefd 0,#f5f2ed 45%,#e5ddd0 100%);"></div>
<svg class="a" style="left:1218px;top:441px;" width="8" height="10" viewBox="0 0 8 10"><path d="M0,1.5H8M0,4.5H8M0,7.5H8" stroke="#c9bda9" stroke-width="1"/></svg>
<svg class="a" style="left:1219.5px;top:125.5px;" width="6" height="6" viewBox="0 0 6 6"><path d="M0.4,5.2H5.6L3,0.6z" fill="#7b776f" stroke="#55524c" stroke-width="0.7"/></svg>
<svg class="a" style="left:1219.5px;top:922.6px;" width="6" height="6" viewBox="0 0 6 6"><path d="M0.4,0.8H5.6L3,5.4z" fill="#7b776f" stroke="#55524c" stroke-width="0.7"/></svg>
<svg class="a" style="left:1214px;top:100px;" width="16" height="16" viewBox="0 0 16 16"><circle cx="5.8" cy="6.6" r="4" fill="#f4f2ee" stroke="#3a3a38" stroke-width="1.4"/><path d="M8.9,9.7L12.3,13.2" stroke="#3a3a38" stroke-width="2" stroke-linecap="round"/><path d="M5,5.4L6,4.6V8.6M4.8,8.6H7.2" stroke="#3a3a38" stroke-width="0.9" fill="none"/></svg>
<svg class="a" style="left:1215px;top:938px;" width="14" height="14" viewBox="0 0 14 14"><path d="M1.6,1.2 L11.4,8.2 C10.5,10.2 5.5,12.8 3.2,12.4z" fill="#d9d8d0" stroke="#cfcbc2" stroke-width="0.6"/><path d="M1.6,1.2L6.5,12" stroke="#ecebe5" stroke-width="1.4"/></svg>
<div class="a" style="left:1238px;top:98px;width:1px;height:857px;background:#d9cfc0;"></div>
<div class="a" style="left:1239px;top:98px;width:1px;height:857px;background:#f6f3ef;"></div>
<div class="a" style="left:6px;top:114px;width:30px;height:30px;border:1px solid #a09179;border-radius:4px;background:linear-gradient(#c3b7a3 0,#cabfad 12%,#b6a995 55%,#a89a84 100%);box-shadow:0 0 0 1px rgba(255,255,255,0.45);"></div>
<svg class="a" style="left:0px;top:0px;" width="1" height="1" viewBox="0 0 1 1"><defs><linearGradient id="tb1" x1="0" y1="0" x2="1" y2="1"><stop offset="0" stop-color="#eef3f9"/><stop offset="1" stop-color="#9db7d4"/></linearGradient><linearGradient id="tb2" x1="0.1" y1="0.1" x2="0.85" y2="0.9"><stop offset="0" stop-color="#ffffff"/><stop offset="1" stop-color="#f9a6b3"/></linearGradient><linearGradient id="tb7" x1="0.1" y1="0" x2="0.8" y2="1"><stop offset="0" stop-color="#fffbd6"/><stop offset="1" stop-color="#f2e26c"/></linearGradient><linearGradient id="tb3" x1="0" y1="0" x2="0" y2="1"><stop offset="0" stop-color="#7c7c7c"/><stop offset="0.45" stop-color="#9c9c9c"/><stop offset="1" stop-color="#dedede"/></linearGradient><linearGradient id="tb4" x1="0" y1="0" x2="1" y2="1"><stop offset="0" stop-color="#69c07a"/><stop offset="0.5" stop-color="#dff2e2"/><stop offset="1" stop-color="#69c07a"/></linearGradient><linearGradient id="tb5" x1="0" y1="0" x2="1" y2="0"><stop offset="0" stop-color="#8ec1dc"/><stop offset="1" stop-color="#2f6f96"/></linearGradient><linearGradient id="tb6" x1="0" y1="0" x2="0" y2="1"><stop offset="0" stop-color="#fbe2da"/><stop offset="1" stop-color="#f3b7a6"/></linearGradient></defs></svg>
<svg class="a" style="left:9px;top:117px;" width="24" height="24" viewBox="0 0 24 24"><path d="M6.9,3.6 V19.9 L10,17 L12.9,22.9 L15.8,21.2 L13,15.7 L17.3,15.3z" fill="#000" stroke="#fff" stroke-width="1.1" stroke-linejoin="miter"/></svg>
<svg class="a" style="left:9px;top:149px;" width="24" height="24" viewBox="0 0 24 24"><defs><linearGradient id="ndg" x1="0" y1="0" x2="1" y2="1"><stop offset="0" stop-color="#5a5af0"/><stop offset="1" stop-color="#b0b0f4"/></linearGradient></defs><path d="M2.6,19 C2.4,15 2.8,12 4,9.6 M10,5 C12.5,3.4 15.5,2.6 19.4,2.4" fill="none" stroke="#444" stroke-width="0.9"/><rect x="3.6" y="4.1" width="5.9" height="5.4" fill="url(#ndg)" stroke="#1414f4" stroke-width="1.3"/><rect x="19.5" y="0.6" width="3.7" height="3.7" fill="#c9c9ff" stroke="#4a4af6" stroke-width="0.9"/><rect x="0.6" y="19.2" width="3.7" height="3.7" fill="#c9c9ff" stroke="#4a4af6" stroke-width="0.9"/><path d="M9,9 L21,16.5 L16.5,22z" fill="#000"/></svg>
<svg class="a" style="left:9px;top:181px;" width="24" height="24" viewBox="0 0 24 24"><path d="M1.5,22 V13 C4,12.8 5.6,12.4 7,11 C9.5,8.5 10,2 14.5,1.6 C17,1.4 19.6,2.6 19.4,5 C19.3,6.6 18,7.4 16.6,7 C17.4,5.6 16,4.6 14.8,5.6 C13.4,7 14,10 16,11.4 C17.6,12.6 20,13 22.5,13 V22z" fill="url(#tb3)"/><path d="M1.5,13 C4,12.8 5.6,12.4 7,11 C9.5,8.5 10,2 14.5,1.6 C17,1.4 19.6,2.6 19.4,5 C19.3,6.6 18,7.4 16.6,7 C17.4,5.6 16,4.6 14.8,5.6 C13.4,7 14,10 16,11.4 C17.6,12.6 20,13 22.5,13" fill="none" stroke="#1a1a1a" stroke-width="1.7" stroke-linejoin="round"/><path d="M1.5,13 C4,12.8 5.6,12.4 7,11 C9.5,8.5 10,2 14.5,1.6 C17,1.4 19.6,2.6 19.4,5" fill="none" stroke="#fff" stroke-width="0.55"/></svg>
<svg class="a" style="left:9px;top:213px;" width="24" height="24" viewBox="0 0 24 24"><path d="M14,14 L21.6,20.6" stroke="#2a2a2a" stroke-width="5.2" stroke-linecap="round"/><path d="M15.6,15.4 L21.4,20.4" stroke="#f5a510" stroke-width="3.4" stroke-linecap="round"/><path d="M16.4,14.8 L21.6,19.2" stroke="#ffd46a" stroke-width="1" stroke-linecap="round"/><path d="M12.6,12.8 L14.8,14.8" stroke="#8a8a8a" stroke-width="3.6"/><circle cx="8" cy="8" r="7" fill="url(#tb1)" stroke="#1a1a1a" stroke-width="1.5"/><path d="M3.4,7 A4.8,4.8 0 0 1 8,3.2" stroke="#fff" stroke-width="1.6" fill="none" stroke-linecap="round"/></svg>
<svg class="a" style="left:9px;top:245px;" width="24" height="24" viewBox="0 0 24 24"><rect x="2.6" y="2.8" width="19" height="18.6" fill="url(#tb1)" stroke="#000" stroke-width="1.5"/></svg>
<svg class="a" style="left:9px;top:277px;" width="24" height="24" viewBox="0 0 24 24"><defs><linearGradient id="cbl" x1="0" y1="0" x2="1" y2="0"><stop offset="0" stop-color="#8f90cc"/><stop offset="1" stop-color="#c9caec"/></linearGradient><linearGradient id="cbr" x1="0" y1="0" x2="1" y2="0"><stop offset="0" stop-color="#d5d6f3"/><stop offset="1" stop-color="#f3f3fd"/></linearGradient><linearGradient id="cbb" x1="0" y1="0" x2="1" y2="1"><stop offset="0" stop-color="#6a6bb6"/><stop offset="1" stop-color="#2d2e80"/></linearGradient></defs><path d="M3,4.8 L13.5,0.2 L22.2,8 L21.5,19.2 L11,23.5 L2.2,17z" fill="none" stroke="#fff" stroke-width="2.4" stroke-linejoin="round" opacity="0.7"/><path d="M3,4.8 L13.5,0.2 L13.5,13.5 L2.2,17z" fill="url(#cbl)"/><path d="M13.5,0.2 L22.2,8 L21.5,19.2 L13.5,13.5z" fill="url(#cbr)"/><path d="M2.2,17 L13.5,13.5 L21.5,19.2 L11,23.5z" fill="url(#cbb)"/><path d="M3,4.8 L13.5,0.2 L22.2,8 L21.5,19.2 L11,23.5 L2.2,17z" fill="none" stroke="#4d4d5e" stroke-width="1" stroke-linejoin="round"/></svg>
<svg class="a" style="left:9px;top:309px;" width="24" height="24" viewBox="0 0 24 24"><circle cx="12" cy="12" r="9.4" fill="url(#tb2)" stroke="#111" stroke-width="1.2"/></svg>
<svg class="a" style="left:9px;top:341px;" width="24" height="24" viewBox="0 0 24 24"><path d="M8.5,2.2 L16,5 L15.5,14 L5.5,16 L1.5,8.2z" fill="url(#tb7)" stroke="#222" stroke-width="1.2" stroke-linejoin="round"/><path d="M15.8,7.5 L17.8,12.2 L23,12.8 L19,16.2 L20.2,21.5 L15.3,18.6 L9.8,21.2 L11.8,16 L8,12.6 L13.2,12.2z" fill="url(#tb7)" stroke="#222" stroke-width="1.2" stroke-linejoin="round"/></svg>
<svg class="a" style="left:9px;top:373px;" width="24" height="24" viewBox="0 0 24 24"><path d="M10.78,12.26 L10.87,12.16 L10.98,12.06 L11.10,11.98 L11.24,11.92 L11.40,11.88 L11.56,11.86 L11.74,11.86 L11.91,11.89 L12.09,11.95 L12.26,12.04 L12.42,12.16 L12.57,12.30 L12.69,12.46 L12.80,12.65 L12.88,12.86 L12.93,13.09 L12.95,13.32 L12.93,13.56 L12.95,13.84 L13.02,14.21 L13.03,14.61 L12.95,15.04 L12.78,15.47 L12.53,15.89 L12.18,16.28 L11.75,16.63 L11.23,16.91 L10.65,17.12 L10.01,17.22 L9.40,17.06 L8.82,16.83 L8.26,16.50 L7.74,16.09 L7.28,15.61 L6.89,15.06 L6.58,14.44 L6.35,13.78 L6.21,13.09 L6.20,12.37 L6.30,11.66 L6.49,10.96 L6.78,10.29 L7.17,9.66 L7.65,9.08 L8.20,8.58 L8.83,8.15 L9.51,7.81 L10.24,7.57 L11.01,7.43 L11.79,7.40 L12.58,7.47 L13.35,7.65 L14.10,7.94 L14.81,8.34 L15.47,8.83 L16.05,9.42 L16.55,10.09 L16.95,10.83 L17.25,11.63 L17.44,12.46 L17.51,13.33 L17.45,14.20 L17.40,15.10 L17.35,16.08 L17.15,17.09 L16.77,18.10 L16.23,19.08 L15.51,20.01 L14.63,20.84 L13.59,21.56 L12.42,22.14 L11.13,22.55 L9.75,22.78 L8.40,22.48 L7.10,22.00 L5.88,21.34 L4.77,20.52 L3.77,19.54 L2.92,18.44 L2.23,17.23 L1.72,15.93 L1.39,14.57 L1.25,13.18 L1.30,11.77 L1.42,10.35 L1.74,8.94 L2.27,7.57 L3.00,6.27 L3.91,5.07 L5.00,4.00 L6.24,3.07 L7.62,2.32 L9.12,1.76 L10.69,1.42 L12.32,1.35 L13.93,1.63 L15.47,2.13 L16.94,2.83 L18.28,3.73 L19.49,4.81 L20.53,6.04 L21.39,7.41 L22.05,8.87 L22.50,10.42 L22.72,12.00 L22.73,13.60 L22.77,15.23 L22.66,16.91 L22.30,18.60 L21.68,20.27" fill="none" stroke="#111" stroke-width="1.25" stroke-linejoin="round" stroke-linecap="round"/></svg>
<svg class="a" style="left:9px;top:405px;" width="24" height="24" viewBox="0 0 24 24"><path d="M1.3,1.5 H6.2 L1.3,12.5 L8,11.4 C8,14 7.2,17 8.2,19.5 C9.5,23 13,23.8 16,22 C18,21 19.5,19.5 20.6,17.7" fill="none" stroke="#111" stroke-width="1.1" stroke-linejoin="round"/><path d="M16,0.3 C19,0.2 22,3.5 22.7,6.6 L18.1,11.2 L12.2,9.3z" fill="#f7a414"/><path d="M16,0.3 C17.4,0.3 18.6,0.9 19.6,1.8 L15,10.2 L12.2,9.3z" fill="#fff02a"/><path d="M12.2,9.3 L18.1,11.2 L11.5,20.9z" fill="#fff" stroke="#111" stroke-width="0.5"/><path d="M15.5,10.4 L18.1,11.2 L11.5,20.9z" fill="#f7c56a"/><path d="M11.5,20.9 L11.9,17.5 L14,18.3z" fill="#000"/><path d="M22.7,6.6 L13.5,20 L11.5,20.9" fill="none" stroke="#111" stroke-width="1.3"/><path d="M12.2,9.3 L16,0.3" stroke="#111" stroke-width="0.7"/></svg>
<svg class="a" style="left:9px;top:437px;" width="24" height="24" viewBox="0 0 24 24"><path d="M13.9,1.4 H1.7 C5,5 8.3,8 9.2,13 C9.8,17 8.5,20 6.6,21.2 L4.3,21.4" fill="none" stroke="#111" stroke-width="1.1"/><path d="M4.2,22.4 H10.2" stroke="#111" stroke-width="1"/><rect x="0.7" y="19.6" width="3.8" height="3.8" fill="#fff" stroke="#111" stroke-width="1.1"/><circle cx="11.5" cy="22.4" r="1.25" fill="#fff" stroke="#111" stroke-width="0.9"/><path d="M15.6,12.8 L12.4,21 L13.6,21.2 L17.6,13.8z" fill="#ddd" stroke="#222" stroke-width="0.8"/><path d="M17.1,0.3 L23.7,6.7 L20.9,11.8 L13.6,8z" fill="url(#tb5)" stroke="#123" stroke-width="1.1" stroke-linejoin="round"/><path d="M17.1,1 L19.3,3 L15.8,9 L13.9,8z" fill="#cfe6f2" opacity="0.7"/><path d="M14.6,9.5 L20,12.3 L18.6,14.4 L14.6,12.6z" fill="#f7cb3d" stroke="#222" stroke-width="0.7"/></svg>
<svg class="a" style="left:9px;top:469px;" width="24" height="24" viewBox="0 0 24 24"><path d="M0.3,0.6 C4,0.4 7.5,1.6 8.6,5 C9.8,9 8,13 8.2,16.5 C8.4,19.5 10,21.2 13,21.2 C16.5,21.2 19,18.8 23,20.6 C19.5,20 17,23.2 12.5,23.2 C7.5,23.2 4,20 3.6,15 C3.2,10.5 5,6.5 4,3.5 C3.4,1.8 2,1 0.3,0.6z" fill="#0c0c0c"/><path d="M15.3,0.5 L23.4,3 L21.6,7.8 L13.6,4.9z" fill="url(#tb5)" stroke="#234" stroke-width="0.8"/><path d="M16.4,5.4 L21.6,7.3 L21,8.9 L15.8,7z" fill="#d11"/><path d="M13.2,6.2 L20.4,9 C20.6,13 17,17 10.8,20.2 C10,15.5 10.6,10.5 13.2,6.2z" fill="#f9d24a" stroke="#111" stroke-width="1"/><path d="M13.4,7.5 C11.6,11 11.2,15 11.4,18.6 L13.8,11.8z" fill="#fff" opacity="0.85"/><path d="M13.9,11.8 L10.9,20" stroke="#111" stroke-width="0.9"/><circle cx="14" cy="11.6" r="1.1" fill="#111"/></svg>
<svg class="a" style="left:9px;top:501px;" width="24" height="24" viewBox="0 0 24 24"><text x="1.2" y="21" font-family="Liberation Sans" font-weight="bold" font-size="26" fill="#0a0a0a" stroke="#0a0a0a" stroke-width="0.8" stroke-linejoin="round" textLength="18" lengthAdjust="spacingAndGlyphs">A</text><path d="M21.4,-0.6 V23.4 M19,-0.6 H23.8 M19,23.4 H23.8" stroke="#fff" stroke-width="2.2" fill="none" opacity="0.9"/><path d="M21.4,-0.6 V23.4 M19.2,-0.6 H23.6 M19.2,23.4 H23.6" stroke="#111" stroke-width="1" fill="none"/></svg>
<svg class="a" style="left:9px;top:533px;" width="24" height="24" viewBox="0 0 24 24"><defs><linearGradient id="spg" x1="0" y1="0" x2="1" y2="0"><stop offset="0" stop-color="#2e8a14"/><stop offset="0.55" stop-color="#5fc438"/><stop offset="0.8" stop-color="#b6f08e"/><stop offset="1" stop-color="#3f9c22"/></linearGradient></defs><path d="M12.2,10.6 L19.8,9.3 L23.4,20.6 L20.2,23.2 L13,19.8z" fill="url(#spg)" stroke="#1c4c0c" stroke-width="0.9" stroke-linejoin="round"/><path d="M12.1,10.8 L19.9,9.4 L20.3,11 L12.4,12.4z" fill="#f2b81e" stroke="#5a4406" stroke-width="0.5"/><path d="M13.8,9.6 V7.4 C13.8,4.4 18.2,3.8 18.6,6.8 L18.8,8.8z" fill="#f4f4f4" stroke="#222" stroke-width="0.9"/><g fill="#111"><circle cx="3.6" cy="2.6" r="1.05"/><circle cx="6.4" cy="3.8" r="0.8"/><circle cx="2.6" cy="6.6" r="1.1"/><circle cx="5.8" cy="6.8" r="0.7"/><circle cx="8.4" cy="5.4" r="0.6"/><circle cx="4.4" cy="11.4" r="1.1"/><circle cx="7" cy="9.6" r="0.7"/><circle cx="9.4" cy="8" r="0.6"/><circle cx="10.4" cy="6.4" r="0.5"/></g></svg>
<svg class="a" style="left:9px;top:565px;" width="24" height="24" viewBox="0 0 24 24"><path d="M11.5,0.7 L21.2,6 L11,22.4 L2.2,17z" fill="url(#tb6)" stroke="#111" stroke-width="1.2" stroke-linejoin="round"/></svg>
<svg class="a" style="left:9px;top:597px;" width="24" height="24" viewBox="0 0 24 24"><defs><linearGradient id="bkg" x1="0" y1="0" x2="1" y2="0.3"><stop offset="0" stop-color="#d4ebf4"/><stop offset="0.5" stop-color="#8cc0da"/><stop offset="1" stop-color="#3b7aa4"/></linearGradient></defs><ellipse cx="10" cy="21.6" rx="9.8" ry="2.1" fill="#9bdaa6" stroke="#2a6a38" stroke-width="0.9"/><path d="M5.2,9 C4.6,12.5 7.2,15 8,17.5 L8.4,21.4 L10.6,21.4 L10.4,17 C9.4,14 7.6,11 6.6,8.4z" fill="#8fd39c" stroke="#2a6a38" stroke-width="0.8"/><path d="M4.2,6.6 L18.4,0.6 C20.6,2.4 22.4,6.4 22.5,9.6 L10.2,17 C8.6,15.6 4.6,10.4 4.2,6.6z" fill="url(#bkg)" stroke="#0e1c26" stroke-width="1.2" stroke-linejoin="round"/><path d="M4.2,6.6 C5.4,6.2 9.6,11.6 10.2,17 C8,15 4.6,10 4.2,6.6z" fill="#7fcf8e" stroke="#0e1c26" stroke-width="0.8"/><path d="M6.4,5.6 L7.6,0.4 L9,4.4 M9,4.4 L11,10.6" fill="none" stroke="#111" stroke-width="0.9"/><circle cx="11.1" cy="10.9" r="1.2" fill="#cfd8de" stroke="#111" stroke-width="0.8"/></svg>
<svg class="a" style="left:9px;top:629px;" width="24" height="24" viewBox="0 0 24 24"><defs><linearGradient id="grg" x1="0.1" y1="0.9" x2="0.9" y2="0.1"><stop offset="0" stop-color="#ffffff"/><stop offset="0.45" stop-color="#b4e0bb"/><stop offset="1" stop-color="#4fb462"/></linearGradient></defs><rect x="1" y="1" width="21.6" height="21.6" fill="url(#grg)" stroke="#6cc47c" stroke-width="0.8"/><path d="M6,7 L18.6,17.4" stroke="#222" stroke-width="1.3"/><rect x="3.6" y="4.6" width="4.6" height="4.6" rx="0.8" fill="#fff" stroke="#444" stroke-width="1.1"/><rect x="16.4" y="15" width="4.6" height="4.6" rx="0.8" fill="#fff" stroke="#444" stroke-width="1.1"/></svg>
<svg class="a" style="left:9px;top:661px;" width="24" height="24" viewBox="0 0 24 24"><path d="M5.2,18.2 L14.5,8.5 L16.8,10.8 L7.5,20 C6.5,20.5 5,19.5 5.2,18.2z" fill="#a9c5e2" stroke="#223" stroke-width="1"/><path d="M13,7 L18.5,12.2" stroke="#111" stroke-width="2.6" stroke-linecap="round"/><path d="M15.5,8.5 L19,3.8 C20.5,2 23.5,4.5 21.8,6.5 L17.5,10.5z" fill="#111" stroke="#111" stroke-width="1"/><path d="M4.5,20 C5.5,21.5 5.2,23 4.2,23.2 C3,23.2 2.8,21.8 4.5,20z" fill="#6f9fd0" stroke="#234" stroke-width="0.7"/></svg>
<svg class="a" style="left:9px;top:693px;" width="24" height="24" viewBox="0 0 24 24"><path d="M12,5 H20 V18 M8.5,8 L5.5,18" fill="none" stroke="#111" stroke-width="1.1"/><rect x="6" y="1.5" width="7.5" height="6.5" fill="#bcd2ea" stroke="#111" stroke-width="1.2"/><rect x="9.2" y="10.2" width="7.2" height="4.2" fill="#f6d336" stroke="#6c5a08" stroke-width="1"/><rect x="1" y="17" width="7.5" height="6.5" fill="#bcd2ea" stroke="#111" stroke-width="1.2"/><rect x="16" y="17" width="7.5" height="6.5" fill="#bcd2ea" stroke="#111" stroke-width="1.2"/></svg>
<svg class="a" style="left:1257px;top:101px;" width="8" height="5" viewBox="0 0 8 5"><path d="M0.5,0V4.2M3.5,0V4.2M6.5,0V4.2" stroke="#d3cab9" stroke-width="1"/></svg>
<svg class="a" style="left:1249px;top:117px;" width="22" height="22" viewBox="0 0 22 22"><path d="M6.6,6.8 L12.4,12.2" stroke="#000" stroke-width="1.5"/><path d="M14.4,14 L9.8,13.6 L14,9.6z" fill="#000"/><rect x="-2.1" y="-2.1" width="4.2" height="4.2" transform="translate(5,5.1) rotate(45)" fill="#b4b4f4" stroke="#1414f4" stroke-width="1.4"/><rect x="-2.1" y="-2.1" width="4.2" height="4.2" transform="translate(16.3,16.5) rotate(45)" fill="#b8b8f0" stroke="#1a8a1a" stroke-width="1.4"/></svg>
<div class="a" style="left:1251.5px;top:148px;width:17px;height:1px;background:linear-gradient(90deg,#ece7de,#e0d7c9 25%,#e0d7c9 75%,#ece7de);"></div>
<div class="a" style="left:1251.5px;top:149px;width:17px;height:1px;background:#f6f3ee;"></div>
<div class="a" style="left:1251.5px;top:310px;width:17px;height:1px;background:linear-gradient(90deg,#ece7de,#e0d7c9 25%,#e0d7c9 75%,#ece7de);"></div>
<div class="a" style="left:1251.5px;top:311px;width:17px;height:1px;background:#f6f3ee;"></div>
<div class="a" style="left:1251.5px;top:562px;width:17px;height:1px;background:linear-gradient(90deg,#ece7de,#e0d7c9 25%,#e0d7c9 75%,#ece7de);"></div>
<div class="a" style="left:1251.5px;top:563px;width:17px;height:1px;background:#f6f3ee;"></div>
<svg class="a" style="left:1249px;top:158px;" width="22" height="22" viewBox="0 0 22 22"><path d="M5.5,6V20M5.5,6H20" stroke="#aaa59b" stroke-width="1.1" stroke-dasharray="2,1.4" fill="none"/><rect x="-1.9" y="-1.9" width="3.8" height="3.8" transform="translate(5.5,6) rotate(45)" fill="#e4dfd6" stroke="#aaa59b"/></svg>
<svg class="a" style="left:1249px;top:188px;" width="22" height="22" viewBox="0 0 22 22"><path d="M3,18.5H17.5V3" stroke="#aaa59b" stroke-width="1.1" stroke-dasharray="2,1.4" fill="none"/></svg>
<svg class="a" style="left:1249px;top:218px;" width="22" height="22" viewBox="0 0 22 22"><path d="M2,18H17M17,3V18" stroke="#aaa59b" stroke-width="1.1" stroke-dasharray="2,1.4" fill="none"/><rect x="-1.9" y="-1.9" width="3.8" height="3.8" transform="translate(17,18) rotate(45)" fill="#e4dfd6" stroke="#aaa59b"/></svg>
<svg class="a" style="left:1249px;top:248px;" width="22" height="22" viewBox="0 0 22 22"><path d="M3,18.5H16.5V3" stroke="#aaa59b" stroke-width="1.1" stroke-dasharray="2,1.4" fill="none"/><rect x="-2" y="-2.6" width="4" height="5.2" rx="1.6" transform="translate(16.5,8.5)" fill="#dcd7ce" stroke="#aaa59b"/></svg>
<svg class="a" style="left:1249px;top:276.5px;" width="22" height="22" viewBox="0 0 22 22"><path d="M3,19.5H16.5V5" stroke="#aaa59b" stroke-width="1.1" stroke-dasharray="2,1.4" fill="none"/><circle cx="7" cy="9.5" r="1.8" fill="none" stroke="#aaa59b" stroke-width="1"/></svg>
<div class="a" style="left:1246px;top:318px;width:28px;height:27.5px;border:1px solid #cfc2ad;border-radius:4px;background:linear-gradient(#e1d9cc,#ebe5dc);"></div>
<svg class="a" style="left:1249px;top:320.5px;" width="22" height="22" viewBox="0 0 22 22"><path d="M4.5,11 C5.5,8.5 7.5,7.2 9.5,7 M10.2,8.6 C10.5,14 14,19 20,20" fill="none" stroke="#b2ada4" stroke-width="1.1"/><rect x="-2" y="-2" width="4" height="4" transform="translate(11.7,6.4) rotate(30)" fill="#e9e4db" stroke="#b2ada4"/></svg>
<svg class="a" style="left:1249px;top:350px;" width="22" height="22" viewBox="0 0 22 22"><path d="M3,4.6 C9,5 13,9 13.5,14 C13.5,16.5 12,18 10.7,17.9 C14,18.5 18,16 19.6,12" fill="none" stroke="#b2ada4" stroke-width="1.1"/></svg>
<svg class="a" style="left:1249px;top:379px;" width="22" height="22" viewBox="0 0 22 22"><path d="M3,20 L19.6,4.6 M3,12.6 C9,12.8 14,12.4 19.6,11.6" fill="none" stroke="#b2ada4" stroke-width="1.1"/><circle cx="11" cy="12.4" r="1.7" fill="#dcd7ce" stroke="#b2ada4"/></svg>
<svg class="a" style="left:1249px;top:409px;" width="22" height="22" viewBox="0 0 22 22"><path d="M3,5 C10,5.5 17,9 18.3,14 C18.5,17 16.5,20 14.5,21" fill="none" stroke="#b2ada4" stroke-width="1.1"/><rect x="-2.1" y="-2.1" width="4.2" height="4.2" transform="translate(10.4,17.7) rotate(35)" fill="#e9e4db" stroke="#b2ada4"/></svg>
<svg class="a" style="left:1249px;top:439px;" width="22" height="22" viewBox="0 0 22 22"><path d="M3,4.8 L8,6 M11.5,9 C13.5,11.5 12.5,15.5 11.7,17 C14,18 17.5,15.5 18.3,12.4" fill="none" stroke="#b2ada4" stroke-width="1.1"/><rect x="8" y="5.2" width="4" height="4" fill="#e9e4db" stroke="#b2ada4"/></svg>
<svg class="a" style="left:1249px;top:471px;" width="22" height="22" viewBox="0 0 22 22"><path d="M3,17.4 L17.4,3.7 M4.2,13 L6.8,18 M12.2,5.5 L14.8,10.5 M14.8,3 L17.4,8" fill="none" stroke="#b2ada4" stroke-width="1.1"/><circle cx="10" cy="10.7" r="1.7" fill="#dcd7ce" stroke="#b2ada4"/></svg>
<svg class="a" style="left:1249px;top:528.5px;" width="22" height="22" viewBox="0 0 22 22"><path d="M3,18.5H17.5V3" stroke="#aaa59b" stroke-width="1.1" stroke-dasharray="2,1.4" fill="none"/><path d="M3.5,9H11.5M7.5,5V13" stroke="#aaa59b" stroke-width="1.2"/></svg>
<svg class="a" style="left:1249px;top:573.5px;" width="22" height="22" viewBox="0 0 22 22"><defs><linearGradient id="pgi" x1="0" y1="0" x2="1" y2="1"><stop offset="0" stop-color="#f7f5f2"/><stop offset="1" stop-color="#d9d5cd"/></linearGradient></defs><rect x="4.5" y="2.5" width="12.5" height="16.5" fill="url(#pgi)" stroke="#bcb7ae"/></svg>
<div class="a" style="left:1246px;top:600px;width:28px;height:27px;border:1px solid #cfc2ad;border-radius:4px;background:linear-gradient(#e1d9cc,#ebe5dc);"></div>
<svg class="a" style="left:1249px;top:603px;" width="22" height="22" viewBox="0 0 22 22"><path d="M3.5,4.8H20.5M3.5,9H20.5M3.5,13.2H20.5M3.5,17.4H20.5" stroke="#aaa59c" stroke-width="1.1" fill="none"/><path d="M5.2,2.5V19.5M9.7,2.5V19.5M14.2,2.5V19.5M18.7,2.5V19.5" stroke="#a09b92" stroke-width="1.2" fill="none"/></svg>
<div class="a" style="left:1246px;top:630px;width:28px;height:27px;border:1px solid #cfc2ad;border-radius:4px;background:linear-gradient(#e1d9cc,#ebe5dc);"></div>
<svg class="a" style="left:1249px;top:633.5px;" width="22" height="22" viewBox="0 0 22 22"><path d="M5,2.5V19.5M18.5,2.5V19.5M10.5,19.5L16.5,2.5" stroke="#aaa59c" stroke-width="1.3" fill="none"/></svg>
<div class="a" style="left:874px;top:251px;width:235px;height:425px;background:#eeeae5;border:1px solid #8f8778;border-top:none;border-radius:7px 7px 7px 7px;box-shadow:0 0 0 0 #000;"></div>
<div class="a" style="left:874px;top:251px;width:235px;height:27px;border-radius:6px 6px 0 0;background:linear-gradient(#4f4d47 0,#45433e 30%,#3d3c37 100%);border-top:1px solid #65625a;"></div>
<div class="a" style="left:884px;top:256px;width:58px;height:18px;border-radius:9px;background:linear-gradient(#2f2e2b,#4a4843);box-shadow:0 1px 0 #5a5852;"></div>
<svg class="a" style="left:874px;top:251px;" width="80" height="28" viewBox="0 0 80 28"><g transform="translate(19,14)"><circle r="7.2" fill="url(#gin)" stroke="#33322f" stroke-width="1"/><path d="M-2.9,-2.9L2.9,2.9M2.9,-2.9L-2.9,2.9" stroke="#8b8881" stroke-width="1.25" fill="none"/></g><g transform="translate(39.5,14)"><circle r="7.2" fill="url(#gin)" stroke="#33322f" stroke-width="1"/><path d="M-3.6,-1.4L0,2.2L3.6,-1.4" stroke="#8b8881" stroke-width="1.25" fill="none"/></g><g transform="translate(59.5,14)"><circle r="7.2" fill="url(#gin)" stroke="#33322f" stroke-width="1"/><path d="M-3.6,1.4L0,-2.2L3.6,1.4" stroke="#8b8881" stroke-width="1.25" fill="none"/></g></svg>
<svg class="a tx" style="left:0;top:0" width="1" height="1"><text x="955.05" y="268.30" font-size="13.80" fill="#aeaba3" stroke="#aeaba3" stroke-width="0.09" letter-spacing="1.068" font-weight="bold" style="fill:#2f2e2b">Align</text><text x="955.05" y="269.30" font-size="13.80" fill="#aeaba3" stroke="#aeaba3" stroke-width="0.09" letter-spacing="1.068" font-weight="bold">Align</text></svg>
<svg class="a tx" style="left:0;top:0" width="1" height="1"><text x="999.15" y="268.30" font-size="13.80" fill="#aeaba3" stroke="#aeaba3" stroke-width="0.09" letter-spacing="1.523" font-weight="bold" style="fill:#2f2e2b">and</text><text x="999.15" y="269.30" font-size="13.80" fill="#aeaba3" stroke="#aeaba3" stroke-width="0.09" letter-spacing="1.523" font-weight="bold">and</text></svg>
<svg class="a tx" style="left:0;top:0" width="1" height="1"><text x="1032.10" y="268.30" font-size="13.80" fill="#aeaba3" stroke="#aeaba3" stroke-width="0.09" letter-spacing="1.019" font-weight="bold" style="fill:#2f2e2b">Distribut</text><text x="1032.10" y="269.30" font-size="13.80" fill="#aeaba3" stroke="#aeaba3" stroke-width="0.09" letter-spacing="1.019" font-weight="bold">Distribut</text></svg>
<div class="a" style="left:875px;top:278px;width:233px;height:24.5px;background:linear-gradient(#bfb19a,#b3a48c);border-bottom:1px solid #a39479;"></div>
<svg class="a tx" style="left:0;top:0" width="1" height="1"><text x="899.30" y="294.60" font-size="14.10" fill="#33322e" stroke="#33322e" stroke-width="0.18" letter-spacing="0.543">Align</text></svg>
<svg class="a tx" style="left:0;top:0" width="1" height="1"><text x="936.19" y="294.60" font-size="14.10" fill="#33322e" stroke="#33322e" stroke-width="0.18" letter-spacing="0.592">and</text></svg>
<svg class="a tx" style="left:0;top:0" width="1" height="1"><text x="963.37" y="294.60" font-size="14.10" fill="#33322e" stroke="#33322e" stroke-width="0.18" letter-spacing="0.458">Distribute</text></svg>
<svg class="a tx" style="left:0;top:0" width="1" height="1"><text x="1030.85" y="294.60" font-size="14.10" fill="#33322e" stroke="#33322e" stroke-width="0.18" letter-spacing="0.235">(S...</text></svg>
<svg class="a" style="left:1066px;top:284.5px;" width="11" height="11" viewBox="0 0 11 11"><rect x="0.6" y="0.6" width="9.8" height="9.8" rx="2" fill="#d3c8b5" stroke="#3c3b37" stroke-width="1"/><path d="M3.5,3L7.8,5.5L3.5,8z" fill="#3c3b37"/></svg>
<svg class="a" style="left:1089px;top:284.5px;" width="11" height="11" viewBox="0 0 11 11"><rect x="0.6" y="0.6" width="9.8" height="9.8" rx="2" fill="#d3c8b5" stroke="#3c3b37" stroke-width="1"/><path d="M3,3L8,8M8,3L3,8" stroke="#3c3b37" stroke-width="2"/></svg>
<div class="a" style="left:880.5px;top:318px;width:220.5px;height:132.5px;border:1px solid #ded7cc;border-radius:4px;box-shadow:inset 1px 1px 0 #f8f6f2, 1px 1px 0 #f8f6f2;"></div>
<div class="a" style="left:883.5px;top:310px;width:36.1px;height:14px;background:#eeeae5;"></div>
<svg class="a tx" style="left:0;top:0" width="1" height="1"><text x="885.10" y="320.50" font-size="14.10" fill="#3c3b37" stroke="#3c3b37" stroke-width="0.18" letter-spacing="0.568">Align</text></svg>
<div class="a" style="left:880.5px;top:467px;width:220.5px;height:79px;border:1px solid #ded7cc;border-radius:4px;box-shadow:inset 1px 1px 0 #f8f6f2, 1px 1px 0 #f8f6f2;"></div>
<div class="a" style="left:883.5px;top:459px;width:67.2px;height:14px;background:#eeeae5;"></div>
<svg class="a tx" style="left:0;top:0" width="1" height="1"><text x="884.17" y="468.60" font-size="14.10" fill="#3c3b37" stroke="#3c3b37" stroke-width="0.18" letter-spacing="0.647">Distribute</text></svg>
<div class="a" style="left:880.5px;top:560.5px;width:220.5px;height:43.5px;border:1px solid #ded7cc;border-radius:4px;box-shadow:inset 1px 1px 0 #f8f6f2, 1px 1px 0 #f8f6f2;"></div>
<div class="a" style="left:883.5px;top:552.5px;width:68.9px;height:14px;background:#eeeae5;"></div>
<svg class="a tx" style="left:0;top:0" width="1" height="1"><text x="884.47" y="563.80" font-size="14.10" fill="#3c3b37" stroke="#3c3b37" stroke-width="0.18" letter-spacing="0.021">Rearrange</text></svg>
<div class="a" style="left:880.5px;top:619.5px;width:220.5px;height:44px;border:1px solid #ded7cc;border-radius:4px;box-shadow:inset 1px 1px 0 #f8f6f2, 1px 1px 0 #f8f6f2;"></div>
<div class="a" style="left:883.5px;top:611.5px;width:115.2px;height:14px;background:#eeeae5;"></div>
<svg class="a tx" style="left:0;top:0" width="1" height="1"><text x="884.27" y="622.70" font-size="14.10" fill="#3c3b37" stroke="#3c3b37" stroke-width="0.18" letter-spacing="0.094">Remove</text></svg>
<svg class="a tx" style="left:0;top:0" width="1" height="1"><text x="942.14" y="622.70" font-size="14.10" fill="#3c3b37" stroke="#3c3b37" stroke-width="0.18" letter-spacing="0.294">overlaps</text></svg>
<div class="a" style="left:877px;top:669px;width:229px;height:1px;background:#ded7cc;"></div>
<svg class="a tx" style="left:0;top:0" width="1" height="1"><text x="881.37" y="344.70" font-size="14.10" fill="#3c3b37" stroke="#3c3b37" stroke-width="0.18" letter-spacing="0.784">Relative</text></svg>
<svg class="a tx" style="left:0;top:0" width="1" height="1"><text x="941.79" y="344.70" font-size="14.10" fill="#3c3b37" stroke="#3c3b37" stroke-width="0.18" letter-spacing="-0.221">to:</text></svg>
<div class="a" style="left:961.3px;top:326.5px;width:137.5px;height:28px;border:1px solid #8d8170;border-radius:4px;background:linear-gradient(#c0b29c 0,#b3a58f 45%,#a5967f 100%);box-shadow:inset 0 1px 0 #d2c6b3;"></div>
<div class="a" style="left:1076px;top:327.5px;width:1px;height:26px;background:#948772;"></div>
<div class="a" style="left:1077px;top:327.5px;width:1px;height:26px;background:#c9bca8;"></div>
<svg class="a" style="left:0px;top:0px;" width="1" height="1" viewBox="0 0 1 1"><path d="M1084.4,337.6 h7 l-3.5,6.2z" fill="#77726a" stroke="#4c4944" stroke-width="0.7" stroke-linejoin="round"/></svg>
<svg class="a tx" style="left:0;top:0" width="1" height="1"><text x="966.27" y="344.90" font-size="14.10" fill="#3c3b37" stroke="#3c3b37" stroke-width="0.18" letter-spacing="0.094">First</text></svg>
<svg class="a tx" style="left:0;top:0" width="1" height="1"><text x="998.55" y="344.90" font-size="14.10" fill="#3c3b37" stroke="#3c3b37" stroke-width="0.18" letter-spacing="0.482">selected</text></svg>
<svg class="a tx" style="left:0;top:0" width="1" height="1"><text x="890.52" y="370.80" font-size="14.10" fill="#3c3b37" stroke="#3c3b37" stroke-width="0.18" letter-spacing="-0.519">Treat</text></svg>
<svg class="a tx" style="left:0;top:0" width="1" height="1"><text x="925.90" y="370.80" font-size="14.10" fill="#3c3b37" stroke="#3c3b37" stroke-width="0.18" letter-spacing="0.528">selection</text></svg>
<svg class="a tx" style="left:0;top:0" width="1" height="1"><text x="989.14" y="370.80" font-size="14.10" fill="#3c3b37" stroke="#3c3b37" stroke-width="0.18" letter-spacing="-0.218">as</text></svg>
<svg class="a tx" style="left:0;top:0" width="1" height="1"><text x="1007.74" y="370.80" font-size="14.10" fill="#3c3b37" stroke="#3c3b37" stroke-width="0.18" letter-spacing="0.458">group:</text></svg>
<div class="a" style="left:1066px;top:361px;width:12px;height:12px;background:#fff;border:1px solid #b5a994;border-radius:2px;"></div>
<svg class="a" style="left:0px;top:0px;" width="1" height="1" viewBox="0 0 1 1"><defs><linearGradient id="bl" x1="0" y1="0" x2="1" y2="0"><stop offset="0" stop-color="#e4edf7"/><stop offset="1" stop-color="#9ab6d6"/></linearGradient><linearGradient id="blv" x1="0" y1="0" x2="0" y2="1"><stop offset="0" stop-color="#e4edf7"/><stop offset="1" stop-color="#9ab6d6"/></linearGradient><linearGradient id="blw" x1="0" y1="0" x2="1" y2="0"><stop offset="0" stop-color="#f4f8fd"/><stop offset="1" stop-color="#b7cdea"/></linearGradient><linearGradient id="bsq" x1="0" y1="0" x2="1" y2="1"><stop offset="0" stop-color="#86aede"/><stop offset="1" stop-color="#e6eef8"/></linearGradient><linearGradient id="yl" x1="0" y1="0" x2="1" y2="1"><stop offset="0" stop-color="#fff3a8"/><stop offset="1" stop-color="#f0b400"/></linearGradient></defs></svg>
<svg class="a" style="left:879px;top:282px;" width="20" height="18" viewBox="0 0 20 18"><path d="M1.35,0V18" stroke="#d40000" stroke-width="1"/><rect x="4.05" y="0.85" width="5.4" height="4.2" fill="url(#bl)" stroke="#000" stroke-width="1.1"/><rect x="4.9" y="1.7" width="3.7" height="2.5" fill="none" stroke="#fff" stroke-opacity="0.55" stroke-width="0.6"/><rect x="4.05" y="7.55" width="14.1" height="3.2" fill="url(#bl)" stroke="#000" stroke-width="1.1"/><rect x="4.9" y="8.4" width="12.4" height="1.5" fill="none" stroke="#fff" stroke-opacity="0.55" stroke-width="0.6"/><rect x="4.05" y="13.55" width="10.4" height="3.6" fill="url(#bl)" stroke="#000" stroke-width="1.1"/><rect x="4.9" y="14.4" width="8.7" height="1.9" fill="none" stroke="#fff" stroke-opacity="0.55" stroke-width="0.6"/></svg>
<svg class="a" style="left:888px;top:384px;" width="24" height="24" viewBox="0 0 24 24"><rect x="0.55" y="5.65" width="16.4" height="6.6" fill="url(#bl)" stroke="#000" stroke-width="1.1"/><rect x="1.4" y="6.5" width="14.7" height="4.9" fill="none" stroke="#fff" stroke-opacity="0.55" stroke-width="0.6"/><rect x="10.85" y="9.95" width="6.1" height="5" fill="url(#bl)" stroke="#000" stroke-width="1.1"/><rect x="11.7" y="10.8" width="4.4" height="3.3" fill="none" stroke="#fff" stroke-opacity="0.55" stroke-width="0.6"/><rect x="5.65" y="17.55" width="11.3" height="4.9" fill="url(#bl)" stroke="#000" stroke-width="1.1"/><rect x="6.5" y="18.4" width="9.6" height="3.2" fill="none" stroke="#fff" stroke-opacity="0.55" stroke-width="0.6"/><path d="M17.5,0V24" stroke="#d40000" stroke-width="1.2" fill="none"/><rect x="18.55" y="0.55" width="4.9" height="4.5" fill="url(#yl)" stroke="#000" stroke-width="1.1"/></svg>
<svg class="a" style="left:924px;top:384px;" width="24" height="24" viewBox="0 0 24 24"><rect x="1.15" y="1.75" width="21.1" height="6.4" fill="url(#bl)" stroke="#000" stroke-width="1.1"/><rect x="2" y="2.6" width="19.4" height="4.7" fill="none" stroke="#fff" stroke-opacity="0.55" stroke-width="0.6"/><rect x="1.15" y="4.95" width="5.9" height="5" fill="url(#bl)" stroke="#000" stroke-width="1.1"/><rect x="2" y="5.8" width="4.2" height="3.3" fill="none" stroke="#fff" stroke-opacity="0.55" stroke-width="0.6"/><rect x="1.15" y="12.85" width="11.2" height="4.4" fill="url(#bl)" stroke="#000" stroke-width="1.1"/><rect x="2" y="13.7" width="9.5" height="2.7" fill="none" stroke="#fff" stroke-opacity="0.55" stroke-width="0.6"/><path d="M0.55,0V24" stroke="#d40000" stroke-width="1.2" fill="none"/><path d="M3,21.6H14.9" stroke="#000" stroke-width="1.1" fill="none"/><path d="M1.4,21.6 l3.1,-2.5 l-0.8,2.5 l0.8,2.5z" fill="#000"/></svg>
<svg class="a" style="left:960px;top:384px;" width="24" height="24" viewBox="0 0 24 24"><rect x="0.75" y="1.75" width="21.7" height="6.4" fill="url(#bl)" stroke="#000" stroke-width="1.1"/><rect x="1.6" y="2.6" width="20" height="4.7" fill="none" stroke="#fff" stroke-opacity="0.55" stroke-width="0.6"/><rect x="7.75" y="5.65" width="7.4" height="4.3" fill="url(#bl)" stroke="#000" stroke-width="1.1"/><rect x="8.6" y="6.5" width="5.7" height="2.6" fill="none" stroke="#fff" stroke-opacity="0.55" stroke-width="0.6"/><rect x="5.85" y="12.85" width="11.4" height="4.4" fill="url(#bl)" stroke="#000" stroke-width="1.1"/><rect x="6.7" y="13.7" width="9.7" height="2.7" fill="none" stroke="#fff" stroke-opacity="0.55" stroke-width="0.6"/><path d="M11.5,0V24" stroke="#d40000" stroke-width="1.2" fill="none"/><path d="M2,21.6H8.5M14.5,21.6H21" stroke="#000" stroke-width="1.1" fill="none"/><path d="M10.6,21.6 l-3.1,-2.5 l0.8,2.5 l-0.8,2.5z" fill="#000"/><path d="M12.4,21.6 l3.1,-2.5 l-0.8,2.5 l0.8,2.5z" fill="#000"/></svg>
<svg class="a" style="left:996px;top:384px;" width="24" height="24" viewBox="0 0 24 24"><rect x="1.75" y="1.75" width="21.2" height="6.4" fill="url(#bl)" stroke="#000" stroke-width="1.1"/><rect x="2.6" y="2.6" width="19.5" height="4.7" fill="none" stroke="#fff" stroke-opacity="0.55" stroke-width="0.6"/><rect x="16.95" y="4.95" width="6" height="5" fill="url(#bl)" stroke="#000" stroke-width="1.1"/><rect x="17.8" y="5.8" width="4.3" height="3.3" fill="none" stroke="#fff" stroke-opacity="0.55" stroke-width="0.6"/><rect x="11.75" y="12.85" width="11.2" height="4.4" fill="url(#bl)" stroke="#000" stroke-width="1.1"/><rect x="12.6" y="13.7" width="9.5" height="2.7" fill="none" stroke="#fff" stroke-opacity="0.55" stroke-width="0.6"/><path d="M23.45,0V24" stroke="#d40000" stroke-width="1.2" fill="none"/><path d="M8.9,21.6H21" stroke="#000" stroke-width="1.1" fill="none"/><path d="M22.8,21.6 l-3.1,-2.5 l0.8,2.5 l-0.8,2.5z" fill="#000"/></svg>
<svg class="a" style="left:1032px;top:384px;" width="24" height="24" viewBox="0 0 24 24"><rect x="7.05" y="5.65" width="16.4" height="6.6" fill="url(#bl)" stroke="#000" stroke-width="1.1"/><rect x="7.9" y="6.5" width="14.7" height="4.9" fill="none" stroke="#fff" stroke-opacity="0.55" stroke-width="0.6"/><rect x="7.05" y="9.95" width="5.9" height="5" fill="url(#bl)" stroke="#000" stroke-width="1.1"/><rect x="7.9" y="10.8" width="4.2" height="3.3" fill="none" stroke="#fff" stroke-opacity="0.55" stroke-width="0.6"/><rect x="7.05" y="17.55" width="11.4" height="4.9" fill="url(#bl)" stroke="#000" stroke-width="1.1"/><rect x="7.9" y="18.4" width="9.7" height="3.2" fill="none" stroke="#fff" stroke-opacity="0.55" stroke-width="0.6"/><path d="M6.5,0V24" stroke="#d40000" stroke-width="1.2" fill="none"/><rect x="0.55" y="0.55" width="5.1" height="4.5" fill="url(#yl)" stroke="#000" stroke-width="1.1"/></svg>
<svg class="a" style="left:1068px;top:384px;" width="24" height="24" viewBox="0 0 24 24"><text x="4.6" y="19" font-family="Liberation Serif" font-style="italic" font-weight="bold" font-size="20" fill="#111">y</text><text x="7" y="7.4" font-family="Liberation Sans" font-weight="bold" font-size="13" fill="#23395c">a</text><path d="M6.5,0V24" stroke="#d40000" stroke-width="1.2" fill="none"/></svg>
<svg class="a" style="left:888px;top:420px;" width="24" height="24" viewBox="0 0 24 24"><rect x="1.55" y="5.65" width="4.6" height="11.1" fill="url(#bl)" stroke="#000" stroke-width="1.1"/><rect x="2.4" y="6.5" width="2.9" height="9.4" fill="none" stroke="#fff" stroke-opacity="0.55" stroke-width="0.6"/><rect x="11.75" y="0.75" width="6.6" height="16" fill="url(#blv)" stroke="#000" stroke-width="1.1"/><rect x="12.6" y="1.6" width="4.9" height="14.3" fill="none" stroke="#fff" stroke-opacity="0.55" stroke-width="0.6"/><rect x="8.8" y="10.55" width="5.55" height="6.2" fill="url(#bl)" stroke="#000" stroke-width="1.1"/><rect x="9.65" y="11.4" width="3.85" height="4.5" fill="none" stroke="#fff" stroke-opacity="0.55" stroke-width="0.6"/><path d="M0,17.3H24" stroke="#d40000" stroke-width="1.2" fill="none"/><rect x="18.55" y="18.55" width="4.9" height="4.7" fill="url(#yl)" stroke="#000" stroke-width="1.1"/></svg>
<svg class="a" style="left:924px;top:420px;" width="24" height="24" viewBox="0 0 24 24"><rect x="6.75" y="1.05" width="4.4" height="11" fill="url(#bl)" stroke="#000" stroke-width="1.1"/><rect x="7.6" y="1.9" width="2.7" height="9.3" fill="none" stroke="#fff" stroke-opacity="0.55" stroke-width="0.6"/><rect x="15.65" y="1.05" width="6.6" height="21" fill="url(#bl)" stroke="#000" stroke-width="1.1"/><rect x="16.5" y="1.9" width="4.9" height="19.3" fill="none" stroke="#fff" stroke-opacity="0.55" stroke-width="0.6"/><rect x="14.05" y="1.05" width="5.2" height="5.7" fill="url(#bl)" stroke="#000" stroke-width="1.1"/><rect x="14.9" y="1.9" width="3.5" height="4" fill="none" stroke="#fff" stroke-opacity="0.55" stroke-width="0.6"/><path d="M0,0.55H24" stroke="#d40000" stroke-width="1.2" fill="none"/><path d="M2.45,3.2V14.9" stroke="#000" stroke-width="1.1" fill="none"/><path d="M2.45,1.2 l-2.5,3.1 l2.5,-0.8 l2.5,0.8z" fill="#000"/></svg>
<svg class="a" style="left:960px;top:420px;" width="24" height="24" viewBox="0 0 24 24"><rect x="6.85" y="5.85" width="4.4" height="11.2" fill="url(#bl)" stroke="#000" stroke-width="1.1"/><rect x="7.7" y="6.7" width="2.7" height="9.5" fill="none" stroke="#fff" stroke-opacity="0.55" stroke-width="0.6"/><rect x="15.65" y="0.75" width="6.8" height="21.3" fill="url(#bl)" stroke="#000" stroke-width="1.1"/><rect x="16.5" y="1.6" width="5.1" height="19.6" fill="none" stroke="#fff" stroke-opacity="0.55" stroke-width="0.6"/><rect x="13.85" y="7.85" width="4.3" height="6.9" fill="url(#bl)" stroke="#000" stroke-width="1.1"/><rect x="14.7" y="8.7" width="2.6" height="5.2" fill="none" stroke="#fff" stroke-opacity="0.55" stroke-width="0.6"/><path d="M0,11.5H24" stroke="#d40000" stroke-width="1.2" fill="none"/><path d="M2.5,2.2V8.5M2.5,14.5V20.8" stroke="#000" stroke-width="1.1" fill="none"/><path d="M2.5,10.5 l-2.5,-3.1 l2.5,0.8 l2.5,-0.8z" fill="#000"/><path d="M2.5,12.5 l-2.5,3.1 l2.5,-0.8 l2.5,0.8z" fill="#000"/></svg>
<svg class="a" style="left:996px;top:420px;" width="24" height="24" viewBox="0 0 24 24"><rect x="7.55" y="10.85" width="4.9" height="11" fill="url(#bl)" stroke="#000" stroke-width="1.1"/><rect x="8.4" y="11.7" width="3.2" height="9.3" fill="none" stroke="#fff" stroke-opacity="0.55" stroke-width="0.6"/><rect x="16.65" y="0.75" width="6.8" height="21.1" fill="url(#bl)" stroke="#000" stroke-width="1.1"/><rect x="17.5" y="1.6" width="5.1" height="19.4" fill="none" stroke="#fff" stroke-opacity="0.55" stroke-width="0.6"/><rect x="14.65" y="15.85" width="5.5" height="6" fill="url(#bl)" stroke="#000" stroke-width="1.1"/><rect x="15.5" y="16.7" width="3.8" height="4.3" fill="none" stroke="#fff" stroke-opacity="0.55" stroke-width="0.6"/><path d="M0,22.4H24" stroke="#d40000" stroke-width="1.2" fill="none"/><path d="M2.45,8V20" stroke="#000" stroke-width="1.1" fill="none"/><path d="M2.45,21.8 l-2.5,-3.1 l2.5,0.8 l2.5,-0.8z" fill="#000"/></svg>
<svg class="a" style="left:1032px;top:420px;" width="24" height="24" viewBox="0 0 24 24"><rect x="1.55" y="6.95" width="4.6" height="11" fill="url(#bl)" stroke="#000" stroke-width="1.1"/><rect x="2.4" y="7.8" width="2.9" height="9.3" fill="none" stroke="#fff" stroke-opacity="0.55" stroke-width="0.6"/><rect x="11.75" y="6.95" width="6.7" height="16" fill="url(#bl)" stroke="#000" stroke-width="1.1"/><rect x="12.6" y="7.8" width="5" height="14.3" fill="none" stroke="#fff" stroke-opacity="0.55" stroke-width="0.6"/><rect x="9.05" y="6.95" width="5.3" height="5.8" fill="url(#bl)" stroke="#000" stroke-width="1.1"/><rect x="9.9" y="7.8" width="3.6" height="4.1" fill="none" stroke="#fff" stroke-opacity="0.55" stroke-width="0.6"/><path d="M0,6.4H24" stroke="#d40000" stroke-width="1.2" fill="none"/><rect x="18.85" y="0.75" width="4.6" height="4.6" fill="url(#yl)" stroke="#000" stroke-width="1.1"/></svg>
<svg class="a" style="left:1068px;top:420px;" width="24" height="24" viewBox="0 0 24 24"><text x="2.2" y="14.4" font-family="Liberation Serif" font-style="italic" font-weight="bold" font-size="20" fill="#111">y</text><text x="14.6" y="13.5" font-family="Liberation Sans" font-weight="bold" font-size="13.5" fill="#23395c">a</text><path d="M0,14.4H24" stroke="#d40000" stroke-width="1.2" fill="none"/></svg>
<div class="a" style="left:1027.4px;top:474.2px;width:33.2px;height:34px;border:1px solid #b9ac96;border-radius:4px;background:linear-gradient(#ddd4c6 0,#d2c8b8 35%,#c4b8a5 100%);box-shadow:0 0 0 1px rgba(255,255,255,0.35);"></div>
<svg class="a" style="left:924px;top:479px;" width="24" height="24" viewBox="0 0 24 24"><rect x="0.55" y="6.75" width="4.7" height="16.5" fill="url(#bl)" stroke="#000" stroke-width="1.1"/><rect x="1.4" y="7.6" width="3" height="14.8" fill="none" stroke="#fff" stroke-opacity="0.55" stroke-width="0.6"/><rect x="9.75" y="8.55" width="2.7" height="8.6" fill="url(#bl)" stroke="#000" stroke-width="1.1"/><rect x="10.6" y="9.4" width="1" height="6.9" fill="none" stroke="#fff" stroke-opacity="0.55" stroke-width="0.6"/><rect x="18.75" y="7.55" width="4.7" height="7.6" fill="url(#bl)" stroke="#000" stroke-width="1.1"/><rect x="19.6" y="8.4" width="3" height="5.9" fill="none" stroke="#fff" stroke-opacity="0.55" stroke-width="0.6"/><path d="M0.55,0V6.5M9.6,0V8.2M18.7,0V7.2" stroke="#d40000" stroke-width="1.1" fill="none"/><path d="M0.55,1.5H18.7" stroke="#000" stroke-width="0.9" fill="none"/><path d="M1.45,0.2V2.8" stroke="#000" stroke-width="0.7" fill="none"/><path d="M9.6,0.2V2.8" stroke="#000" stroke-width="0.7" fill="none"/><path d="M17.8,0.2V2.8" stroke="#000" stroke-width="0.7" fill="none"/><path d="M1.05,1.5 l2.3,-1.5 l-0.8,1.5 l0.8,1.5z" fill="#000"/><path d="M10.1,1.5 l2.3,-1.5 l-0.8,1.5 l0.8,1.5z" fill="#000"/><path d="M9.1,1.5 l-2.3,-1.5 l0.8,1.5 l-0.8,1.5z" fill="#000"/><path d="M18.2,1.5 l-2.3,-1.5 l0.8,1.5 l-0.8,1.5z" fill="#000"/></svg>
<svg class="a" style="left:960px;top:479px;" width="24" height="24" viewBox="0 0 24 24"><rect x="0.75" y="7.55" width="5.7" height="8.7" fill="url(#bl)" stroke="#000" stroke-width="1.1"/><rect x="1.6" y="8.4" width="4" height="7" fill="none" stroke="#fff" stroke-opacity="0.55" stroke-width="0.6"/><rect x="9.75" y="6.75" width="5.7" height="16.5" fill="url(#bl)" stroke="#000" stroke-width="1.1"/><rect x="10.6" y="7.6" width="4" height="14.8" fill="none" stroke="#fff" stroke-opacity="0.55" stroke-width="0.6"/><rect x="19.55" y="9.75" width="3.9" height="11.5" fill="url(#bl)" stroke="#000" stroke-width="1.1"/><rect x="20.4" y="10.6" width="2.2" height="9.8" fill="none" stroke="#fff" stroke-opacity="0.55" stroke-width="0.6"/><path d="M3.5,0V12.5M12.6,0V12.5M21.7,0V12.5" stroke="#d40000" stroke-width="1.1" fill="none"/><path d="M3.5,1.5H21.7" stroke="#000" stroke-width="0.9" fill="none"/><path d="M4.4,0.2V2.8" stroke="#000" stroke-width="0.7" fill="none"/><path d="M12.6,0.2V2.8" stroke="#000" stroke-width="0.7" fill="none"/><path d="M20.8,0.2V2.8" stroke="#000" stroke-width="0.7" fill="none"/><path d="M4,1.5 l2.3,-1.5 l-0.8,1.5 l0.8,1.5z" fill="#000"/><path d="M13.1,1.5 l2.3,-1.5 l-0.8,1.5 l0.8,1.5z" fill="#000"/><path d="M12.1,1.5 l-2.3,-1.5 l0.8,1.5 l-0.8,1.5z" fill="#000"/><path d="M21.2,1.5 l-2.3,-1.5 l0.8,1.5 l-0.8,1.5z" fill="#000"/></svg>
<svg class="a" style="left:996px;top:479px;" width="24" height="24" viewBox="0 0 24 24"><rect x="0.75" y="6.75" width="4.6" height="16.5" fill="url(#bl)" stroke="#000" stroke-width="1.1"/><rect x="1.6" y="7.6" width="2.9" height="14.8" fill="none" stroke="#fff" stroke-opacity="0.55" stroke-width="0.6"/><rect x="11.55" y="8.55" width="2.9" height="8.6" fill="url(#bl)" stroke="#000" stroke-width="1.1"/><rect x="12.4" y="9.4" width="1.2" height="6.9" fill="none" stroke="#fff" stroke-opacity="0.55" stroke-width="0.6"/><rect x="18.85" y="7.55" width="4.6" height="7.6" fill="url(#bl)" stroke="#000" stroke-width="1.1"/><rect x="19.7" y="8.4" width="2.9" height="5.9" fill="none" stroke="#fff" stroke-opacity="0.55" stroke-width="0.6"/><path d="M5.6,0V6.5M14.7,0V8.2M23.5,0V7.2" stroke="#d40000" stroke-width="1.1" fill="none"/><path d="M5.6,1.5H23.5" stroke="#000" stroke-width="0.9" fill="none"/><path d="M6.5,0.2V2.8" stroke="#000" stroke-width="0.7" fill="none"/><path d="M14.7,0.2V2.8" stroke="#000" stroke-width="0.7" fill="none"/><path d="M22.6,0.2V2.8" stroke="#000" stroke-width="0.7" fill="none"/><path d="M6.1,1.5 l2.3,-1.5 l-0.8,1.5 l0.8,1.5z" fill="#000"/><path d="M15.2,1.5 l2.3,-1.5 l-0.8,1.5 l0.8,1.5z" fill="#000"/><path d="M14.2,1.5 l-2.3,-1.5 l0.8,1.5 l-0.8,1.5z" fill="#000"/><path d="M23,1.5 l-2.3,-1.5 l0.8,1.5 l-0.8,1.5z" fill="#000"/></svg>
<svg class="a" style="left:1032px;top:479px;" width="24" height="24" viewBox="0 0 24 24"><rect x="0.9" y="6.7" width="2.3" height="16.7" fill="url(#blw)" stroke="#000" stroke-width="0.8"/><rect x="10.75" y="8.85" width="2.5" height="8.5" fill="url(#blw)" stroke="#000" stroke-width="1.1"/><rect x="11.6" y="9.7" width="0.8" height="6.8" fill="none" stroke="#fff" stroke-opacity="0.55" stroke-width="0.6"/><rect x="20.9" y="6.7" width="2.5" height="16.7" fill="url(#blw)" stroke="#000" stroke-width="0.8"/><path d="M3.5,0V6.5M10.6,0V8.5M13.3,0V8.5M20.6,0V6.5" stroke="#d40000" stroke-width="1.1" fill="none"/><path d="M3.5,1.5H10.6" stroke="#000" stroke-width="0.9" fill="none"/><path d="M4.4,0.2V2.8" stroke="#000" stroke-width="0.7" fill="none"/><path d="M9.7,0.2V2.8" stroke="#000" stroke-width="0.7" fill="none"/><path d="M4,1.5 l2.3,-1.5 l-0.8,1.5 l0.8,1.5z" fill="#000"/><path d="M10.1,1.5 l-2.3,-1.5 l0.8,1.5 l-0.8,1.5z" fill="#000"/><path d="M13.3,1.5H20.6" stroke="#000" stroke-width="0.9" fill="none"/><path d="M14.2,0.2V2.8" stroke="#000" stroke-width="0.7" fill="none"/><path d="M19.7,0.2V2.8" stroke="#000" stroke-width="0.7" fill="none"/><path d="M13.8,1.5 l2.3,-1.5 l-0.8,1.5 l0.8,1.5z" fill="#000"/><path d="M20.1,1.5 l-2.3,-1.5 l0.8,1.5 l-0.8,1.5z" fill="#000"/></svg>
<svg class="a" style="left:1068px;top:479px;" width="24" height="24" viewBox="0 0 24 24"><text x="1.2" y="16.3" font-family="Liberation Sans" font-weight="bold" font-size="13.5" fill="#23395c">a</text><text x="9.5" y="16.7" font-family="Liberation Serif" font-style="italic" font-weight="bold" font-size="19" fill="#111">y</text><path d="M0.6,0V24M14.7,0V24" stroke="#d40000" stroke-width="1.1" fill="none"/><path d="M2.5,2.6H12.8" stroke="#000" stroke-width="1" fill="none"/><path d="M1,2.6 l2.6,-2 l-0.8,2 l0.8,2z" fill="#000"/><path d="M14.3,2.6 l-2.6,-2 l0.8,2 l-0.8,2z" fill="#000"/></svg>
<svg class="a" style="left:924px;top:515px;" width="24" height="24" viewBox="0 0 24 24"><rect x="7.55" y="0.75" width="7.9" height="4.5" fill="url(#blv)" stroke="#000" stroke-width="1.1"/><rect x="8.4" y="1.6" width="6.2" height="2.8" fill="none" stroke="#fff" stroke-opacity="0.55" stroke-width="0.6"/><rect x="8.75" y="9.75" width="8.5" height="2.5" fill="url(#blv)" stroke="#000" stroke-width="1.1"/><rect x="9.6" y="10.6" width="6.8" height="0.8" fill="none" stroke="#fff" stroke-opacity="0.55" stroke-width="0.6"/><rect x="6.75" y="18.75" width="16.7" height="4.7" fill="url(#blv)" stroke="#000" stroke-width="1.1"/><rect x="7.6" y="19.6" width="15" height="3" fill="none" stroke="#fff" stroke-opacity="0.55" stroke-width="0.6"/><path d="M0,0.7H7.2M0,9.4H8.4M0,18.7H6.4" stroke="#d40000" stroke-width="1.1" fill="none"/><path d="M1.6,0.7V18.7" stroke="#000" stroke-width="0.9" fill="none"/><path d="M1.6,1.2 l-1.5,2.3 l1.5,-0.8 l1.5,0.8z" fill="#000"/><path d="M1.6,9.9 l-1.5,2.3 l1.5,-0.8 l1.5,0.8z" fill="#000"/><path d="M1.6,8.9 l-1.5,-2.3 l1.5,0.8 l1.5,-0.8z" fill="#000"/><path d="M1.6,18.2 l-1.5,-2.3 l1.5,0.8 l1.5,-0.8z" fill="#000"/></svg>
<svg class="a" style="left:960px;top:515px;" width="24" height="24" viewBox="0 0 24 24"><rect x="9.75" y="0.85" width="6.7" height="4.1" fill="url(#blv)" stroke="#000" stroke-width="1.1"/><rect x="10.6" y="1.7" width="5" height="2.4" fill="none" stroke="#fff" stroke-opacity="0.55" stroke-width="0.6"/><rect x="6.85" y="8.85" width="16.6" height="4.9" fill="url(#blv)" stroke="#000" stroke-width="1.1"/><rect x="7.7" y="9.7" width="14.9" height="3.2" fill="none" stroke="#fff" stroke-opacity="0.55" stroke-width="0.6"/><rect x="7.75" y="17.55" width="8.7" height="5.9" fill="url(#blv)" stroke="#000" stroke-width="1.1"/><rect x="8.6" y="18.4" width="7" height="4.2" fill="none" stroke="#fff" stroke-opacity="0.55" stroke-width="0.6"/><path d="M0,2.2H13M0,11.4H13M0,20.5H13" stroke="#d40000" stroke-width="1.1" fill="none"/><path d="M1.6,2.2V20.5" stroke="#000" stroke-width="0.9" fill="none"/><path d="M1.6,2.7 l-1.5,2.3 l1.5,-0.8 l1.5,0.8z" fill="#000"/><path d="M1.6,11.9 l-1.5,2.3 l1.5,-0.8 l1.5,0.8z" fill="#000"/><path d="M1.6,10.9 l-1.5,-2.3 l1.5,0.8 l1.5,-0.8z" fill="#000"/><path d="M1.6,20 l-1.5,-2.3 l1.5,0.8 l1.5,-0.8z" fill="#000"/></svg>
<svg class="a" style="left:996px;top:515px;" width="24" height="24" viewBox="0 0 24 24"><rect x="7.55" y="0.75" width="6.9" height="4.1" fill="url(#blv)" stroke="#000" stroke-width="1.1"/><rect x="8.4" y="1.6" width="5.2" height="2.4" fill="none" stroke="#fff" stroke-opacity="0.55" stroke-width="0.6"/><rect x="8.75" y="10.55" width="8.7" height="3.2" fill="url(#blv)" stroke="#000" stroke-width="1.1"/><rect x="9.6" y="11.4" width="7" height="1.5" fill="none" stroke="#fff" stroke-opacity="0.55" stroke-width="0.6"/><rect x="6.65" y="18.75" width="16.8" height="4.7" fill="url(#blv)" stroke="#000" stroke-width="1.1"/><rect x="7.5" y="19.6" width="15.1" height="3" fill="none" stroke="#fff" stroke-opacity="0.55" stroke-width="0.6"/><path d="M0,5.4H7.5M0,14.3H8.4M0,23.45H6.2" stroke="#d40000" stroke-width="1.1" fill="none"/><path d="M1.6,5.4V23.45" stroke="#000" stroke-width="0.9" fill="none"/><path d="M1.6,5.9 l-1.5,2.3 l1.5,-0.8 l1.5,0.8z" fill="#000"/><path d="M1.6,14.8 l-1.5,2.3 l1.5,-0.8 l1.5,0.8z" fill="#000"/><path d="M1.6,13.8 l-1.5,-2.3 l1.5,0.8 l1.5,-0.8z" fill="#000"/><path d="M1.6,22.95 l-1.5,-2.3 l1.5,0.8 l1.5,-0.8z" fill="#000"/></svg>
<svg class="a" style="left:1032px;top:515px;" width="24" height="24" viewBox="0 0 24 24"><rect x="7.4" y="0.6" width="8.2" height="2.8" fill="url(#blv)" stroke="#000" stroke-width="0.8"/><rect x="9.55" y="10.55" width="7.9" height="2.7" fill="url(#blv)" stroke="#000" stroke-width="1.1"/><rect x="10.4" y="11.4" width="6.2" height="1" fill="none" stroke="#fff" stroke-opacity="0.55" stroke-width="0.6"/><rect x="6.55" y="20.65" width="14.9" height="2.8" fill="url(#blv)" stroke="#000" stroke-width="1.1"/><rect x="7.4" y="21.5" width="13.2" height="1.1" fill="none" stroke="#fff" stroke-opacity="0.55" stroke-width="0.6"/><path d="M0,3.8H7.2M0,10H9.2M0,13.8H9.2M0,20.6H6.2" stroke="#d40000" stroke-width="1.1" fill="none"/><path d="M1.6,3.8V10" stroke="#000" stroke-width="0.9" fill="none"/><path d="M1.6,4.3 l-1.5,2.3 l1.5,-0.8 l1.5,0.8z" fill="#000"/><path d="M1.6,9.5 l-1.5,-2.3 l1.5,0.8 l1.5,-0.8z" fill="#000"/><path d="M1.6,13.8V20.6" stroke="#000" stroke-width="0.9" fill="none"/><path d="M1.6,14.3 l-1.5,2.3 l1.5,-0.8 l1.5,0.8z" fill="#000"/><path d="M1.6,20.1 l-1.5,-2.3 l1.5,0.8 l1.5,-0.8z" fill="#000"/></svg>
<svg class="a" style="left:1068px;top:515px;" width="24" height="24" viewBox="0 0 24 24"><text x="12.5" y="22.8" font-family="Liberation Sans" font-weight="bold" font-size="13.5" fill="#23395c">a</text><path d="M0,9.5H24M0,23.45H24" stroke="#d40000" stroke-width="1.1" fill="none"/><path d="M2.5,11V21" stroke="#000" stroke-width="1" fill="none"/><path d="M2.5,23 l-2,-2.6 l2,0.8 l2,-0.8z" fill="#000"/></svg>
<svg class="a" style="left:888px;top:574px;" width="24" height="24" viewBox="0 0 24 24"><path d="M1.5,9.2L7.1,5.3L11.9,10.8L9.2,18L2.2,17.4z M11.9,10.8L18.2,10.2L22.3,5.3M18.2,10.2L22.3,16.5" stroke="#444" stroke-width="1" fill="none"/><rect x="0.2" y="7.9" width="2.6" height="2.6" fill="#c9d0ff" stroke="#6a74e6" stroke-width="0.8"/><rect x="5.8" y="4" width="2.6" height="2.6" fill="#c9d0ff" stroke="#6a74e6" stroke-width="0.8"/><rect x="10.6" y="9.5" width="2.6" height="2.6" fill="#c9d0ff" stroke="#6a74e6" stroke-width="0.8"/><rect x="7.9" y="16.7" width="2.6" height="2.6" fill="#c9d0ff" stroke="#6a74e6" stroke-width="0.8"/><rect x="0.9" y="16.1" width="2.6" height="2.6" fill="#c9d0ff" stroke="#6a74e6" stroke-width="0.8"/><rect x="16.9" y="8.9" width="2.6" height="2.6" fill="#c9d0ff" stroke="#6a74e6" stroke-width="0.8"/><rect x="21" y="4" width="2.6" height="2.6" fill="#c9d0ff" stroke="#6a74e6" stroke-width="0.8"/><rect x="21" y="15.2" width="2.6" height="2.6" fill="#c9d0ff" stroke="#6a74e6" stroke-width="0.8"/></svg>
<svg class="a" style="left:924px;top:574px;" width="24" height="24" viewBox="0 0 24 24"><rect x="2.1" y="2.1" width="10.6" height="9.9" fill="#c9c5bd"/><rect x="1.75" y="1.75" width="9.7" height="9" fill="url(#bsq)" stroke="#7a7f88" stroke-width="0.9"/><rect x="14.3" y="12.5" width="10.2" height="10" fill="#c9c5bd"/><rect x="13.95" y="12.15" width="9.3" height="9.1" fill="url(#bsq)" stroke="#7a7f88" stroke-width="0.9"/><path d="M11.9,5.4H14.5C16.8,5.4 17.6,6.8 17.6,9V11" stroke="#000" stroke-width="1.3" fill="none"/><path d="M13.5,17.6H10C7.6,17.6 6.6,16.2 6.6,14V11.5" stroke="#000" stroke-width="1.3" fill="none"/><path d="M17.6,13.2 l-2.2,-2.6 l2.2,0.8 l2.2,-0.8z" fill="#000"/><path d="M6.6,9.4 l-2.2,2.6 l2.2,-0.8 l2.2,0.8z" fill="#000"/></svg>
<svg class="a" style="left:960px;top:574px;" width="24" height="24" viewBox="0 0 24 24"><rect x="1.9" y="2.1" width="8.6" height="8.1" fill="#c9c5bd"/><rect x="1.55" y="1.75" width="7.7" height="7.2" fill="url(#bsq)" stroke="#7a7f88" stroke-width="0.9"/><rect x="15" y="9.05" width="8.6" height="8.45" fill="#c9c5bd"/><rect x="14.65" y="8.7" width="7.7" height="7.55" fill="url(#bsq)" stroke="#7a7f88" stroke-width="0.9"/><path d="M9.7,5.3H15.5C17.8,5.3 18.7,6.2 18.7,7.6" stroke="#000" stroke-width="1.1" fill="none"/><path d="M18.7,9.6 l-1.8,-2.2 l1.8,0.8 l1.8,-0.8z" fill="#000"/><path d="M14.2,12.2H9C6.8,12.2 6,11.2 6,9.8" stroke="#000" stroke-width="1.1" fill="none"/><path d="M6,8.2 l-1.8,2.2 l1.8,-0.8 l1.8,0.8z" fill="#000"/><path d="M1.1,17.8H11" stroke="#000" stroke-width="1.4" fill="none"/><path d="M4.7,21H13.8" stroke="#000" stroke-width="1.6" fill="none"/><path d="M6.1,15.4V21.2M9.7,15V20.6" stroke="#d40000" stroke-width="1.4" fill="none"/><path d="M6.1,14.4L4.4,17H7.8zM9.7,21.8L8,19.2H11.4z" fill="#d40000"/></svg>
<svg class="a" style="left:996px;top:574px;" width="24" height="24" viewBox="0 0 24 24"><rect x="2" y="2.1" width="8.6" height="8.3" fill="#c9c5bd"/><rect x="1.65" y="1.75" width="7.7" height="7.4" fill="url(#bsq)" stroke="#7a7f88" stroke-width="0.9"/><rect x="15.2" y="9.05" width="8.5" height="8.45" fill="#c9c5bd"/><rect x="14.85" y="8.7" width="7.6" height="7.55" fill="url(#bsq)" stroke="#7a7f88" stroke-width="0.9"/><path d="M9.8,5.3H15.5C17.8,5.3 18.7,6.2 18.7,7.6" stroke="#000" stroke-width="1.1" fill="none"/><path d="M18.7,9.6 l-1.8,-2.2 l1.8,0.8 l1.8,-0.8z" fill="#000"/><path d="M14.4,12.2H9C6.8,12.2 6,11.2 6,9.8" stroke="#000" stroke-width="1.1" fill="none"/><path d="M6,8.2 l-1.8,2.2 l1.8,-0.8 l1.8,0.8z" fill="#000"/><circle cx="6.9" cy="17.6" r="4.4" fill="none" stroke="#d40000" stroke-width="1.2" stroke-dasharray="1.8,1.3"/><path d="M2.9,23 L3.4,19.2L6.8,21.6z" fill="#d40000"/><path d="M8.2,12.4L11.4,13.2L9.4,15.6z" fill="#d40000"/></svg>
<svg class="a" style="left:1032px;top:574px;" width="24" height="24" viewBox="0 0 24 24"><rect x="1.05" y="3.05" width="5.2" height="4" fill="url(#yl)" stroke="#000" stroke-width="1.3"/><rect x="13.25" y="1.05" width="5.1" height="4" fill="url(#yl)" stroke="#000" stroke-width="1.3"/><rect x="18.45" y="8.05" width="4.9" height="4" fill="url(#yl)" stroke="#000" stroke-width="1.3"/><rect x="10.05" y="10.95" width="5.1" height="4.2" fill="url(#yl)" stroke="#000" stroke-width="1.3"/><rect x="1.05" y="18.95" width="5.2" height="4.1" fill="url(#yl)" stroke="#000" stroke-width="1.3"/><rect x="10.95" y="18.05" width="5.3" height="4.1" fill="url(#yl)" stroke="#000" stroke-width="1.3"/></svg>
<svg class="a" style="left:1068px;top:574px;" width="24" height="24" viewBox="0 0 24 24"><path d="M9.7,8.5L17.4,5.3M9.7,14.1L17.4,19M20.6,9.6V18.3" stroke="#d40000" stroke-width="1.2" fill="none"/><rect x="0.85" y="8.05" width="8.2" height="6" fill="url(#yl)" stroke="#000" stroke-width="1.3"/><rect x="18.05" y="3.05" width="5.1" height="5.9" fill="url(#yl)" stroke="#000" stroke-width="1.3"/><rect x="18.05" y="18.95" width="5.1" height="4.2" fill="url(#yl)" stroke="#000" stroke-width="1.3"/></svg>
<svg class="a tx" style="left:0;top:0" width="1" height="1"><text x="881.57" y="648.50" font-size="14.10" fill="#3c3b37" stroke="#3c3b37" stroke-width="0.18" letter-spacing="1.597">H:</text></svg>
<div class="a" style="left:900.5px;top:632.5px;width:43.5px;height:24.5px;background:#fff;border:1px solid #cdc4b5;border-right:none;border-radius:3px 0 0 3px;box-shadow:inset 0 1px 1px #e6e1d9;"></div>
<div class="a" style="left:943px;top:632.5px;width:14px;height:24.5px;background:linear-gradient(#f3efe9,#e1dad0);border:1px solid #b9ae9c;border-radius:0 3px 3px 0;"></div>
<svg class="a" style="left:943px;top:632.5px;" width="14" height="24.5" viewBox="0 0 14 24.5"><path d="M7,3.75 l-2.9,4.6 h5.8z M7,20.75 l-2.9,-4.6 h5.8z" fill="#8f8b84" stroke="#56534d" stroke-width="0.7" stroke-linejoin="round"/></svg>
<svg class="a tx" style="left:0;top:0" width="1" height="1"><text x="903.71" y="648.60" font-size="14.10" fill="#33383b" stroke="#33383b" stroke-width="0.10" letter-spacing="0.744">0.0</text></svg>
<svg class="a tx" style="left:0;top:0" width="1" height="1"><text x="962.20" y="648.50" font-size="14.10" fill="#3c3b37" stroke="#3c3b37" stroke-width="0.18" letter-spacing="0.238">V:</text></svg>
<div class="a" style="left:978.5px;top:632.5px;width:43.5px;height:24.5px;background:#fff;border:1px solid #cdc4b5;border-right:none;border-radius:3px 0 0 3px;box-shadow:inset 0 1px 1px #e6e1d9;"></div>
<div class="a" style="left:1021px;top:632.5px;width:14px;height:24.5px;background:linear-gradient(#f3efe9,#e1dad0);border:1px solid #b9ae9c;border-radius:0 3px 3px 0;"></div>
<svg class="a" style="left:1021px;top:632.5px;" width="14" height="24.5" viewBox="0 0 14 24.5"><path d="M7,3.75 l-2.9,4.6 h5.8z M7,20.75 l-2.9,-4.6 h5.8z" fill="#8f8b84" stroke="#56534d" stroke-width="0.7" stroke-linejoin="round"/></svg>
<svg class="a tx" style="left:0;top:0" width="1" height="1"><text x="982.11" y="648.60" font-size="14.10" fill="#33383b" stroke="#33383b" stroke-width="0.10" letter-spacing="0.694">0.0</text></svg>
<svg class="a" style="left:1046px;top:633px;" width="24" height="24" viewBox="0 0 24 24"><rect x="0.55" y="0.55" width="5.9" height="6.5" fill="url(#bl)" stroke="#000" stroke-width="1.1"/><rect x="1.4" y="1.4" width="4.2" height="4.8" fill="none" stroke="#fff" stroke-opacity="0.55" stroke-width="0.6"/><rect x="0.55" y="10.55" width="5.9" height="12.6" fill="url(#bl)" stroke="#000" stroke-width="1.1"/><rect x="1.4" y="11.4" width="4.2" height="10.9" fill="none" stroke="#fff" stroke-opacity="0.55" stroke-width="0.6"/><rect x="9.25" y="0.55" width="7.1" height="22.6" fill="url(#bl)" stroke="#000" stroke-width="1.1"/><rect x="10.1" y="1.4" width="5.4" height="20.9" fill="none" stroke="#fff" stroke-opacity="0.55" stroke-width="0.6"/><rect x="19.55" y="0.55" width="3.9" height="22.6" fill="url(#bl)" stroke="#000" stroke-width="1.1"/><rect x="20.4" y="1.4" width="2.2" height="20.9" fill="none" stroke="#fff" stroke-opacity="0.55" stroke-width="0.6"/></svg>
<div class="a" style="left:973px;top:502px;width:306.5px;height:27px;background:#000;border-radius:6px;"></div>
<svg class="a tx" style="left:0;top:0" width="1" height="1"><text x="980.77" y="520.00" font-size="14.10" fill="#fff" stroke="#fff" stroke-width="0.18" letter-spacing="0.739">Make</text></svg>
<svg class="a tx" style="left:0;top:0" width="1" height="1"><text x="1021.33" y="520.00" font-size="14.10" fill="#fff" stroke="#fff" stroke-width="0.18" letter-spacing="0.349">horizontal</text></svg>
<svg class="a tx" style="left:0;top:0" width="1" height="1"><text x="1090.04" y="520.00" font-size="14.10" fill="#fff" stroke="#fff" stroke-width="0.18" letter-spacing="-0.046">gaps</text></svg>
<svg class="a tx" style="left:0;top:0" width="1" height="1"><text x="1125.15" y="520.00" font-size="14.10" fill="#fff" stroke="#fff" stroke-width="0.18" letter-spacing="0.566">between</text></svg>
<svg class="a tx" style="left:0;top:0" width="1" height="1"><text x="1185.44" y="520.00" font-size="14.10" fill="#fff" stroke="#fff" stroke-width="0.18" letter-spacing="0.268">objects</text></svg>
<svg class="a tx" style="left:0;top:0" width="1" height="1"><text x="1236.34" y="520.00" font-size="14.10" fill="#fff" stroke="#fff" stroke-width="0.18" letter-spacing="0.321">equal</text></svg>
<svg class="a" style="left:1027px;top:490px;" width="14" height="22" viewBox="0 0 14 22"><path d="M1.5,1.8 V16 L4.8,12.9 L7.2,18.6 L9.6,17.5 L7.2,12 L11.6,11.8z" fill="#fff" stroke="#1a1a1a" stroke-width="0.9" stroke-linejoin="round"/></svg>
<div class="a" style="left:0px;top:955px;width:1268px;height:1px;background:#e2d9c9;"></div>
<div class="a" style="left:0px;top:972px;width:1268px;height:1px;background:#f6f2ec;"></div>
<div class="a" style="left:0px;top:956px;width:46px;height:16px;background:#fff;"></div>
<svg class="a" style="left:0px;top:956px;" width="46" height="16" viewBox="0 0 46 16"><path d="M0,0L46,16M46,0L0,16" stroke="#7a1212" stroke-width="1.6"/></svg>
<div class="a" style="left:46px;top:956px;width:45px;height:16px;background:#fce94f;"></div>
<div class="a" style="left:91px;top:956px;width:45px;height:16px;background:#edd400;"></div>
<div class="a" style="left:136px;top:956px;width:45px;height:16px;background:#c4a000;"></div>
<div class="a" style="left:181px;top:956px;width:45px;height:16px;background:#8ae234;"></div>
<div class="a" style="left:226px;top:956px;width:45px;height:16px;background:#73d216;"></div>
<div class="a" style="left:271px;top:956px;width:45px;height:16px;background:#4e9a06;"></div>
<div class="a" style="left:316px;top:956px;width:45px;height:16px;background:#fcaf3e;"></div>
<div class="a" style="left:361px;top:956px;width:45px;height:16px;background:#f57900;"></div>
<div class="a" style="left:406px;top:956px;width:45px;height:16px;background:#ce5c00;"></div>
<div class="a" style="left:451px;top:956px;width:45px;height:16px;background:#729fcf;"></div>
<div class="a" style="left:496px;top:956px;width:45px;height:16px;background:#3465a4;"></div>
<div class="a" style="left:541px;top:956px;width:45px;height:16px;background:#204a87;"></div>
<div class="a" style="left:586px;top:956px;width:45px;height:16px;background:#ad7fa8;"></div>
<div class="a" style="left:631px;top:956px;width:45px;height:16px;background:#75507b;"></div>
<div class="a" style="left:676px;top:956px;width:45px;height:16px;background:#5c3566;"></div>
<div class="a" style="left:721px;top:956px;width:45px;height:16px;background:#e9b96e;"></div>
<div class="a" style="left:766px;top:956px;width:45px;height:16px;background:#c17d11;"></div>
<div class="a" style="left:811px;top:956px;width:45px;height:16px;background:#8f5902;"></div>
<div class="a" style="left:856px;top:956px;width:45px;height:16px;background:#ef2929;"></div>
<div class="a" style="left:901px;top:956px;width:45px;height:16px;background:#cc0000;"></div>
<div class="a" style="left:946px;top:956px;width:45px;height:16px;background:#a40000;"></div>
<div class="a" style="left:991px;top:956px;width:46px;height:16px;background:#eeeeec;"></div>
<div class="a" style="left:1037px;top:956px;width:46px;height:16px;background:#d3d7cf;"></div>
<div class="a" style="left:1083px;top:956px;width:46px;height:16px;background:#babdb6;"></div>
<div class="a" style="left:1129px;top:956px;width:46px;height:16px;background:#888a85;"></div>
<div class="a" style="left:1175px;top:956px;width:46px;height:16px;background:#555753;"></div>
<div class="a" style="left:1221px;top:956px;width:46px;height:16px;background:#2e3436;"></div>
<svg class="a" style="left:1271.5px;top:960px;" width="8" height="8" viewBox="0 0 8 8"><path d="M7,0.6V7.4L1,4z" fill="#7b776f" stroke="#55524c" stroke-width="0.7"/></svg>
<svg class="a tx" style="left:0;top:0" width="1" height="1"><text x="1.92" y="982.60" font-size="11.00" fill="#3c3b37" stroke="#3c3b37" stroke-width="0.15" letter-spacing="0.241">Fill:</text></svg>
<svg class="a tx" style="left:0;top:0" width="1" height="1"><text x="2.30" y="995.50" font-size="11.00" fill="#3c3b37" stroke="#3c3b37" stroke-width="0.15" letter-spacing="0.653">Stroke:</text></svg>
<svg class="a tx" style="left:0;top:0" width="1" height="1"><text x="42.68" y="982.60" font-size="11.00" fill="#3c3b37" stroke="#3c3b37" stroke-width="0.07" font-weight="bold">m</text></svg>
<svg class="a tx" style="left:0;top:0" width="1" height="1"><text x="42.68" y="995.50" font-size="11.00" fill="#3c3b37" stroke="#3c3b37" stroke-width="0.07" font-weight="bold">m</text></svg>
<svg class="a tx" style="left:0;top:0" width="1" height="1"><text x="74.65" y="982.60" font-size="11.80" fill="#3c3b37" stroke="#3c3b37" stroke-width="0.16" letter-spacing="0.188" font-style="italic">None</text></svg>
<div class="a" style="left:56px;top:986px;width:56px;height:14px;background:#000;"></div>
<svg class="a tx" style="left:0;top:0" width="1" height="1"><text x="116.00" y="995.80" font-size="11.80" fill="#3c3b37" stroke="#3c3b37" stroke-width="0.16">3</text></svg>
<svg class="a tx" style="left:0;top:0" width="1" height="1"><text x="125.43" y="990.00" font-size="12.60" fill="#3c3b37" stroke="#3c3b37" stroke-width="0.17" letter-spacing="0.345">O:</text></svg>
<div class="a" style="left:141.2px;top:976px;width:24px;height:20.5px;background:#fff;border:1px solid #cdc4b5;border-right:none;border-radius:3px 0 0 3px;box-shadow:inset 0 1px 1px #e6e1d9;"></div>
<div class="a" style="left:164.2px;top:976px;width:12px;height:20.5px;background:linear-gradient(#f3efe9,#e1dad0);border:1px solid #b9ae9c;border-radius:0 3px 3px 0;"></div>
<svg class="a" style="left:164.2px;top:976px;" width="12" height="20.5" viewBox="0 0 12 20.5"><path d="M6,3.45 l-2.9,4.4 h5.8z M6,17.05 l-2.9,-4.4 h5.8z" fill="#c9c5bd" stroke="#aaa59c" stroke-width="0.7" stroke-linejoin="round"/></svg>
<svg class="a tx" style="left:145.40px;top:977.60px;overflow:hidden" width="19.40" height="19.50"><text x="0" y="13.00" font-size="13.00" fill="#33383b" stroke="#33383b" stroke-width="0.10">100</text></svg>
<div class="a" style="left:180px;top:976px;width:1px;height:22px;background:#ddd5c9;"></div>
<svg class="a" style="left:186px;top:979px;" width="15" height="12" viewBox="0 0 15 12"><path d="M0.8,7 C3.5,3 11.5,3 14.2,7 C11.5,10.5 3.5,10.5 0.8,7z" fill="#fff" stroke="#111" stroke-width="1.1"/><circle cx="7.5" cy="6.8" r="2.7" fill="#111"/><circle cx="8.4" cy="6" r="0.9" fill="#fff"/><path d="M2.2,3.2L3.4,4.6M5,1.6L5.7,3.4M7.6,1V3M10.2,1.6L9.5,3.4M13,3.2L11.8,4.6" stroke="#111" stroke-width="1"/></svg>
<svg class="a" style="left:207.5px;top:977.5px;" width="12" height="14" viewBox="0 0 12 14"><path d="M2,7.5 V4.5 a3,3 0 0 1 6,0 V5" fill="none" stroke="#2b2b2b" stroke-width="1.3"/><rect x="3.7" y="6.5" width="7.3" height="6.7" rx="0.8" fill="#f3d86a" stroke="#2b2b2b" stroke-width="1"/><rect x="6.2" y="8.6" width="2.2" height="2.4" fill="#fff8d0"/></svg>
<div class="a" style="left:224px;top:974.5px;width:90.5px;height:24px;border:1px solid #8d8170;border-radius:4px;background:linear-gradient(#c0b29c 0,#b3a58f 45%,#a5967f 100%);box-shadow:inset 0 1px 0 #d2c6b3;"></div>
<div class="a" style="left:292px;top:975.5px;width:1px;height:22px;background:#948772;"></div>
<div class="a" style="left:293px;top:975.5px;width:1px;height:22px;background:#c9bca8;"></div>
<svg class="a" style="left:0px;top:0px;" width="1" height="1" viewBox="0 0 1 1"><path d="M300.25,983.6 h7 l-3.5,6.2z" fill="#77726a" stroke="#4c4944" stroke-width="0.7" stroke-linejoin="round"/></svg>
<svg class="a tx" style="left:0;top:0" width="1" height="1"><text x="230.62" y="990.80" font-size="12.60" fill="#33322e" stroke="#33322e" stroke-width="0.08" letter-spacing="0.812" font-weight="bold">•Layer 1</text></svg>
<svg class="a tx" style="left:0;top:0" width="1" height="1"><text x="321.25" y="990.80" font-size="14.20" fill="#2e2d2a" stroke="#2e2d2a" stroke-width="0.09" letter-spacing="0.870" font-weight="bold">Alt</text></svg>
<svg class="a tx" style="left:0;top:0" width="1" height="1"><text x="342.04" y="990.80" font-size="14.00" fill="#2e2d2a" stroke="#2e2d2a" stroke-width="0.18">:</text></svg>
<svg class="a tx" style="left:0;top:0" width="1" height="1"><text x="350.04" y="990.80" font-size="14.00" fill="#2e2d2a" stroke="#2e2d2a" stroke-width="0.18" letter-spacing="0.352">click</text></svg>
<svg class="a tx" style="left:0;top:0" width="1" height="1"><text x="383.79" y="990.80" font-size="14.00" fill="#2e2d2a" stroke="#2e2d2a" stroke-width="0.18" letter-spacing="1.080">to</text></svg>
<svg class="a tx" style="left:0;top:0" width="1" height="1"><text x="401.25" y="990.80" font-size="14.00" fill="#2e2d2a" stroke="#2e2d2a" stroke-width="0.18" letter-spacing="0.262">select</text></svg>
<svg class="a tx" style="left:0;top:0" width="1" height="1"><text x="444.46" y="990.80" font-size="14.00" fill="#2e2d2a" stroke="#2e2d2a" stroke-width="0.18" letter-spacing="0.348">under;</text></svg>
<svg class="a tx" style="left:0;top:0" width="1" height="1"><text x="489.19" y="990.80" font-size="14.00" fill="#2e2d2a" stroke="#2e2d2a" stroke-width="0.18" letter-spacing="0.683">drag</text></svg>
<svg class="a tx" style="left:0;top:0" width="1" height="1"><text x="523.29" y="990.80" font-size="14.00" fill="#2e2d2a" stroke="#2e2d2a" stroke-width="0.18" letter-spacing="0.880">to</text></svg>
<svg class="a tx" style="left:0;top:0" width="1" height="1"><text x="538.79" y="990.80" font-size="14.00" fill="#2e2d2a" stroke="#2e2d2a" stroke-width="0.18" letter-spacing="0.947">move</text></svg>
<svg class="a tx" style="left:0;top:0" width="1" height="1"><text x="580.55" y="990.80" font-size="14.00" fill="#2e2d2a" stroke="#2e2d2a" stroke-width="0.18" letter-spacing="0.306">selected</text></svg>
<svg class="a tx" style="left:0;top:0" width="1" height="1"><text x="639.44" y="990.80" font-size="14.00" fill="#2e2d2a" stroke="#2e2d2a" stroke-width="0.18" letter-spacing="0.510">or</text></svg>
<svg class="a tx" style="left:0;top:0" width="1" height="1"><text x="656.55" y="990.80" font-size="14.00" fill="#2e2d2a" stroke="#2e2d2a" stroke-width="0.18" letter-spacing="0.262">select</text></svg>
<svg class="a tx" style="left:0;top:0" width="1" height="1"><text x="699.16" y="990.80" font-size="14.00" fill="#2e2d2a" stroke="#2e2d2a" stroke-width="0.18" letter-spacing="-1.730">by</text></svg>
<svg class="a tx" style="left:0;top:0" width="1" height="1"><text x="719.49" y="990.80" font-size="14.00" fill="#2e2d2a" stroke="#2e2d2a" stroke-width="0.18" letter-spacing="0.380">touch</text></svg>
<div class="a" style="left:1125px;top:975px;width:1px;height:24px;background:#e3dcd1;"></div>
<svg class="a tx" style="left:0;top:0" width="1" height="1"><text x="1127.76" y="982.80" font-size="11.80" fill="#3c3b37" stroke="#3c3b37" stroke-width="0.16" letter-spacing="0.147">X:</text></svg>
<svg class="a tx" style="left:0;top:0" width="1" height="1"><text x="1127.76" y="995.40" font-size="11.80" fill="#3c3b37" stroke="#3c3b37" stroke-width="0.16" letter-spacing="0.296">Y:</text></svg>
<svg class="a tx" style="left:0;top:0" width="1" height="1"><text x="1146.20" y="982.80" font-size="11.40" fill="#3c3b37" stroke="#3c3b37" stroke-width="0.15" letter-spacing="-0.597" font-family="Liberation Mono">683.77</text></svg>
<svg class="a tx" style="left:0;top:0" width="1" height="1"><text x="1146.26" y="995.40" font-size="11.40" fill="#3c3b37" stroke="#3c3b37" stroke-width="0.15" letter-spacing="-0.632" font-family="Liberation Mono">943.99</text></svg>
<svg class="a tx" style="left:0;top:0" width="1" height="1"><text x="1191.12" y="988.40" font-size="12.60" fill="#3c3b37" stroke="#3c3b37" stroke-width="0.17" letter-spacing="0.298">Z:</text></svg>
<div class="a" style="left:1205px;top:977.5px;width:46px;height:16.5px;background:#fff;"></div>
<div class="a" style="left:1250px;top:976.5px;width:10px;height:18.5px;background:linear-gradient(#f3efe9,#e1dad0);border:1px solid #b9ae9c;border-radius:0 4px 4px 0;border-left-color:#d5ccbd;"></div>
<svg class="a" style="left:1250px;top:976.5px;" width="10" height="18.5" viewBox="0 0 10 18.5"><path d="M5,3.45 l-2.9,4.6 h5.8z M5,15.05 l-2.9,-4.6 h5.8z" fill="#8f8b84" stroke="#56534d" stroke-width="0.7" stroke-linejoin="round"/></svg>
<svg class="a tx" style="left:0;top:0" width="1" height="1"><text x="1210.04" y="989.60" font-size="12.80" fill="#33383b" stroke="#33383b" stroke-width="0.09" letter-spacing="-0.287">141%</text></svg>
<svg class="a" style="left:1268px;top:988px;" width="12" height="12" viewBox="0 0 12 12"><path d="M11,2L2,11M11,6L6,11M11,9.5L9.5,11" stroke="#d6cec1" stroke-width="1.2" stroke-dasharray="1.5,1.5"/></svg>
</body></html>
